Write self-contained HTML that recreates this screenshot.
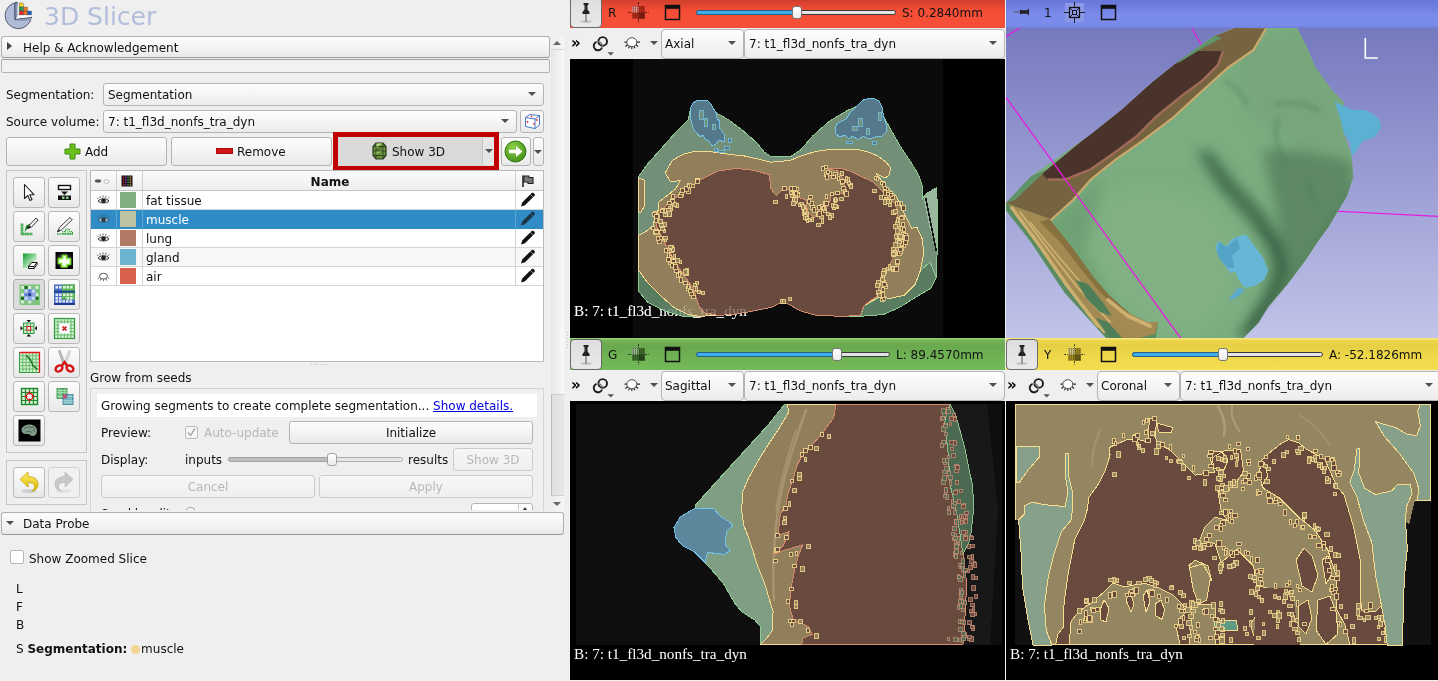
<!DOCTYPE html>
<html lang="en">
<head>
<meta charset="utf-8">
<title>3D Slicer</title>
<style>
html,body{margin:0;padding:0}
body{width:1438px;height:681px;overflow:hidden;background:#efefef;position:relative;-webkit-font-smoothing:antialiased;
 font-family:"DejaVu Sans","Liberation Sans",sans-serif;font-size:12px;color:#111;line-height:18px}
.a{position:absolute;box-sizing:border-box;white-space:nowrap}
.btn{position:absolute;box-sizing:border-box;border:1px solid #b4b4b4;border-radius:3px;
 background:linear-gradient(#fdfdfd,#f2f2f2 60%,#e9e9e9);white-space:nowrap}
.btn.dis{color:#b8b8b8;background:linear-gradient(#f6f6f6,#efefef)}
.combo{position:absolute;box-sizing:border-box;border:1px solid #b4b4b4;border-radius:3px;
 background:linear-gradient(#fefefe,#f3f3f3 60%,#ececec);white-space:nowrap;padding-left:4px}
.arr{position:absolute;width:0;height:0;border-left:4px solid transparent;border-right:4px solid transparent;border-top:4.500px solid #505050}
.tb{position:absolute;box-sizing:border-box;width:32px;height:31px;border:1px solid #b9b9b9;border-radius:3px;
 background:linear-gradient(#fcfcfc,#f1f1f1 60%,#e8e8e8)}
.tb svg{position:absolute;left:0;top:0}
.row{position:absolute;left:91px;width:452px;height:19px;box-sizing:border-box;border-bottom:1px solid #d4d4d4;background:#fff}
.row .c1{position:absolute;left:25px;top:0;width:1px;height:18px;background:#d4d4d4}
.row .c2{position:absolute;left:51px;top:0;width:1px;height:18px;background:#d4d4d4}
.row .c3{position:absolute;left:424px;top:0;width:1px;height:18px;background:#d4d4d4}
.row .sw{position:absolute;left:29px;top:1px;width:16px;height:16px}
.row .nm{position:absolute;left:55px;top:1px}
.row svg{position:absolute}
.serif{font-family:"Liberation Serif","DejaVu Serif",serif;color:#fff;font-size:15px}
</style>
</head>
<body>

<!-- ================= LEFT PANEL ================= -->
<div id="left" class="a" style="left:0;top:0;width:566px;height:681px;background:rgba(239,239,239,.99);will-change:transform">

<!-- logo -->
<svg class="a" style="left:0;top:0" width="36" height="32" viewBox="0 0 36 32">
 <path d="M17.500 2.300A13.200 13.200 0 1 0 31.400 17.200L15 19.200V3z" fill="#b0bbd8" stroke="#4c5268" stroke-width=".9" stroke-linejoin="round"/>
 <path d="M14.200 3.400L17.500 2.300V16.500L14.600 19.300z" fill="#4d5570"/>
 <path d="M15.300 3.800L17.300 3V16L15.500 17.800z" fill="#8792b4"/>
 <path d="M14.600 19.300L31.400 17.200 30.800 19.400C26 21 19 21.200 14.800 20.600z" fill="#8d98ba"/>
 <path d="M14.600 19.300L31.400 17.200" stroke="#3c4258" stroke-width="1"/>
 <path d="M17.500 15.200H30.200L31.300 17.100 16 18.800z" fill="#fafafa"/>
 <path d="M17.500 6v9.500l1.800-.5V4z" fill="#e4ecec"/>
 <rect x="19.300" y="3" width="4" height="4" fill="#f6d21e" stroke="#3a3a44" stroke-width=".350"/>
 <rect x="19.300" y="7" width="4" height="4" fill="#20a060" stroke="#3a3a44" stroke-width=".350"/>
 <rect x="19.300" y="11" width="4" height="3.900" fill="#f02424" stroke="#3a3a44" stroke-width=".350"/>
 <rect x="23.600" y="7" width="3.900" height="4" fill="#f47a28" stroke="#3a3a44" stroke-width=".350"/>
 <rect x="23.600" y="11" width="3.900" height="3.900" fill="#ee7020" stroke="#3a3a44" stroke-width=".350"/>
 <rect x="27.700" y="11" width="3.800" height="3.900" fill="#1c5fc0" stroke="#3a3a44" stroke-width=".350"/>
</svg>
<div class="a" style="left:44px;top:0;font-size:25px;line-height:34px;color:#b3bedd">3D Slicer</div>

<!-- Help & Acknowledgement -->
<div class="btn" style="left:1px;top:36px;width:549px;height:22px;border-color:#b0b0b0;border-bottom-color:#999"></div>
<div class="a" style="left:7px;top:42px;width:0;height:0;border-top:4px solid transparent;border-bottom:4px solid transparent;border-left:5px solid #444"></div>
<div class="a" style="left:23px;top:39px">Help &amp; Acknowledgement</div>
<div class="a" style="left:1px;top:59px;width:549px;height:14px;border:1px solid #b4b4b4;border-top-color:#a0a0a0;border-radius:2px;background:#f1f1f1"></div>

<!-- scrollbar -->
<div class="a" style="left:551px;top:37px;width:13px;height:474px;background:linear-gradient(90deg,#e6e6e6,#f9f9f9)"></div>
<div class="a" style="left:551px;top:37px;width:13px;height:13px;background:linear-gradient(90deg,#ececec,#f6f6f6);border-bottom:1px solid #d8d8d8"></div>
<div class="a" style="left:551px;top:394px;width:13px;height:102px;background:linear-gradient(90deg,#e0e0e0,#e7e7e7);border-left:1px solid #bdbdbd;border-top:1px solid #cfcfcf;border-bottom:1px solid #cfcfcf"></div>
<div class="a" style="left:551px;top:497px;width:13px;height:14px;background:linear-gradient(90deg,#ececec,#f6f6f6)"></div>
<div class="a" style="left:553px;top:41px;width:0;height:0;border-left:4px solid transparent;border-right:4px solid transparent;border-bottom:4px solid #666"></div>
<div class="a" style="left:553px;top:502px;width:0;height:0;border-left:4px solid transparent;border-right:4px solid transparent;border-top:4px solid #666"></div>

<!-- Segmentation row -->
<div class="a" style="left:6px;top:86px">Segmentation:</div>
<div class="combo" style="left:103px;top:83px;width:441px;height:23px;line-height:23px">Segmentation</div>
<div class="arr" style="left:528px;top:92px"></div>
<div class="a" style="left:6px;top:113px">Source volume:</div>
<div class="combo" style="left:103px;top:110px;width:414px;height:23px;line-height:23px">7: t1_fl3d_nonfs_tra_dyn</div>
<div class="arr" style="left:501px;top:119px"></div>
<div class="btn" style="left:520px;top:110px;width:24px;height:23px"></div>
<svg class="a" style="left:524px;top:113px" width="17" height="17" viewBox="0 0 17 17">
 <path d="M1.5 4.5 L6 1.5 L15.5 2.5 L15.5 12 L11 15.5 L1.5 13.5Z M1.5 4.5 L11 6 L15.5 2.5 M11 6 L11 15.5" fill="#fff" stroke="#4a78c8" stroke-width="1" stroke-linejoin="round"/>
 <circle cx="7.5" cy="3.3" r=".9" fill="#e33"/><circle cx="3.5" cy="9" r=".9" fill="#e33"/><circle cx="13" cy="7" r=".9" fill="#e33"/><circle cx="10" cy="11" r=".9" fill="#e33"/>
</svg>

<!-- Add / Remove / Show 3D -->
<div class="btn" style="left:6px;top:137px;width:161px;height:29px"></div>
<svg class="a" style="left:64px;top:143px" width="17" height="17" viewBox="0 0 17 17"><path d="M6 1h5v5h5v5h-5v5h-5v-5h-5v-5h5z" fill="#6cc01c" stroke="#3d8a10" stroke-width="1"/></svg>
<div class="a" style="left:85px;top:143px">Add</div>
<div class="btn" style="left:171px;top:137px;width:161px;height:29px"></div>
<div class="a" style="left:216px;top:148px;width:17px;height:6px;background:#d21414;border:1px solid #a80c0c"></div>
<div class="a" style="left:237px;top:143px">Remove</div>
<div class="a" style="left:333px;top:132px;width:166px;height:39px;border:5px solid #c00000;background:#d9d9d9"></div>
<div class="a" style="left:482px;top:138px;width:1px;height:27px;background:#c4c4c4"></div>
<div class="a" style="left:483px;top:138px;width:11px;height:27px;background:#e6e6e6"></div>
<svg class="a" style="left:372px;top:142px" width="15" height="18" viewBox="0 0 15 18">
 <path d="M4 1h7l3 3.5v9L11 17H4L1 13.5v-9z" fill="#6a9440" stroke="#2c3a1c" stroke-width="1.2"/>
 <path d="M4 1v16M11 1v16M1 4.5h13M1 9h13M1 13.5h13M4 9l7-4.5M4 13.5l7-4.5" stroke="#2c3a1c" stroke-width=".8" fill="none"/>
 <path d="M4.5 1.5h6l-6 3.5z" fill="#b9e08a"/><path d="M4.5 9.5 L10.5 9.5 L4.5 13z" fill="#8fc060"/>
</svg>
<div class="a" style="left:392px;top:143px">Show 3D</div>
<div class="arr" style="left:485px;top:149px"></div>
<div class="btn" style="left:501px;top:137px;width:30px;height:29px"></div>
<svg class="a" style="left:504px;top:140px" width="23" height="23" viewBox="0 0 23 23">
 <defs><radialGradient id="gg" cx=".4" cy=".3" r=".8"><stop offset="0" stop-color="#8fd14a"/><stop offset="1" stop-color="#3a8a12"/></radialGradient></defs>
 <circle cx="11.5" cy="11.5" r="10.5" fill="url(#gg)" stroke="#2f7410" stroke-width="1"/>
 <path d="M5 9.7h7V6l6.5 5.5L12 17v-3.7H5z" fill="#fff"/>
</svg>
<div class="btn" style="left:533px;top:137px;width:11px;height:29px"></div>
<div class="arr" style="left:534px;top:150px;border-left-width:4px;border-right-width:4px"></div>

<!-- effects toolbox -->
<div class="a" style="left:6px;top:170px;width:81px;height:283px;border:1px solid #c6c6c6"></div>
<div class="tb" style="left:13px;top:177px"><svg width="30" height="29" viewBox="0 0 30 29"><path d="M10.5 6.5v14l3.2-3 2.3 5 2-1-2.3-4.8h4.3z" fill="#fff" stroke="#222" stroke-width="1.1" stroke-linejoin="round"/></svg></div>
<div class="tb" style="left:48px;top:177px"><svg width="30" height="29" viewBox="0 0 30 29"><rect x="9.5" y="7.500" width="12" height="4" fill="#fff" stroke="#111" stroke-width="1.4"/><path d="M12 13.5h7l-3.500 3.500z" fill="#111"/><rect x="9" y="17.500" width="13" height="4.500" fill="#111"/><rect x="13" y="18.500" width="2.500" height="2.500" fill="#8c8"/><rect x="17" y="18.500" width="2.500" height="2.500" fill="#8c8"/></svg></div>
<div class="tb" style="left:13px;top:211px"><svg width="30" height="29" viewBox="0 0 30 29"><path d="M8 11.500v10.500h10.500" stroke="#3aa84a" stroke-width="2.600" fill="none"/><path d="M8 11.500v10.500h10.500" stroke="#c8ecc8" stroke-width="1" fill="none" stroke-dasharray="1 1.500"/><path d="M10.500 20l1.500-6.500 7-3z" fill="#1c8c2c"/><path d="M15 13.500l7-7.500 2.200 2-7 7.500z" fill="#f4f4f4" stroke="#222" stroke-width=".9"/><path d="M12.500 16l2.500-2.500 2.200 2-3 1.500z" fill="#222"/></svg></div>
<div class="tb" style="left:48px;top:211px"><svg width="30" height="29" viewBox="0 0 30 29"><path d="M8.500 20l2-4.500 10.500-10 2.200 2.200-10.500 10z" fill="#fafafa" stroke="#222" stroke-width=".9"/><path d="M8.500 20l1.200-2.800 1.600 1.600z" fill="#222"/><path d="M13.500 22v-2.500h3V17h4v2.500h3V22z" fill="#bfe6bf" stroke="#2a9a3a" stroke-width="1" stroke-dasharray="1.200 .800"/><path d="M8 22h16" stroke="#2a9a3a" stroke-width="1.400" stroke-dasharray="1.500 1"/></svg></div>
<div class="tb" style="left:13px;top:245px"><svg width="30" height="29" viewBox="0 0 30 29"><defs><linearGradient id="er" x1="0" y1="0" x2="1" y2="1"><stop offset="0" stop-color="#0f9a2c"/><stop offset=".55" stop-color="#9fdca8"/><stop offset="1" stop-color="#fff"/></linearGradient></defs><path d="M9 7.500h13.500v6l-8 8.500H9z" fill="url(#er)"/><path d="M14.500 20.500l3-4h5.500l-3 4z M14.500 20.500v2h5.500v-2 M20 22.500l3-4v-2" fill="#fff" stroke="#111" stroke-width="1"/></svg></div>
<div class="tb" style="left:48px;top:245px"><svg width="30" height="29" viewBox="0 0 30 29"><defs><radialGradient id="ld"><stop offset="0" stop-color="#9a9a9a"/><stop offset="1" stop-color="#050505"/></radialGradient></defs><rect x="6.500" y="6" width="17.500" height="17" fill="url(#ld)"/><path d="M13.500 9.500h4v3h4v6h-3.500v2.500h-5.500v-3.500h-3v-5h4z" fill="#f4fff0" stroke="#78e22e" stroke-width="1.600" stroke-linejoin="round"/></svg></div>
<div class="tb" style="left:13px;top:279px;background:#dcdcdc;border-color:#adadad"><svg width="30" height="29" viewBox="0 0 30 29"><rect x="5.500" y="4.500" width="20.500" height="20.500" fill="#7fc47f"/><g fill="#d8ecd8"><rect x="7" y="6" width="3" height="3"/><rect x="14.200" y="6" width="3" height="3"/><rect x="21.400" y="6" width="3" height="3"/><rect x="7" y="13.200" width="3" height="3"/><rect x="21.400" y="13.200" width="3" height="3"/><rect x="7" y="20.400" width="3" height="3"/><rect x="14.200" y="20.400" width="3" height="3"/></g><g fill="#1a6a1a"><rect x="10.600" y="6" width="3" height="3"/><rect x="21.400" y="16.800" width="3" height="3"/><rect x="7" y="16.800" width="3" height="3"/></g><rect x="10" y="9" width="11.500" height="11.500" fill="#8aa6e0"/><g fill="#c9d6f2"><rect x="10.600" y="9.600" width="3" height="3"/><rect x="17.800" y="9.600" width="3" height="3"/><rect x="10.600" y="16.800" width="3" height="3"/><rect x="17.800" y="16.800" width="3" height="3"/></g><rect x="14.200" y="13.200" width="3" height="3" fill="#1c3a90"/><rect x="14.200" y="9.600" width="3" height="3" fill="#5f80d0"/><rect x="10.600" y="13.200" width="3" height="3" fill="#5f80d0"/></svg></div>
<div class="tb" style="left:48px;top:279px"><svg width="30" height="29" viewBox="0 0 30 29"><rect x="5" y="4.500" width="21" height="20.500" fill="#4a6cc4"/><rect x="13" y="4.500" width="13" height="15" fill="#5ab45a"/><rect x="5" y="10.800" width="21" height="1.800" fill="#1c3a90"/><rect x="5" y="23" width="21" height="2" fill="#1c3a90"/><g fill="#dfe6f6"><rect x="6.500" y="6" width="2.600" height="2.600"/><rect x="10" y="6" width="2.600" height="2.600"/><rect x="6.500" y="13.500" width="2.600" height="2.600"/><rect x="10" y="13.500" width="2.600" height="2.600"/><rect x="6.500" y="17" width="2.600" height="2.600"/><rect x="10" y="17" width="2.600" height="2.600"/><rect x="13.500" y="20.200" width="2.600" height="2.400"/><rect x="17" y="20.200" width="2.600" height="2.400"/><rect x="20.500" y="20.200" width="2.600" height="2.400"/><rect x="6.500" y="20.200" width="2.600" height="2.400"/><rect x="10" y="20.200" width="2.600" height="2.400"/></g><g fill="#dff0d8"><rect x="14" y="6" width="2.600" height="2.600"/><rect x="17.500" y="6" width="2.600" height="2.600"/><rect x="21" y="6" width="2.600" height="2.600"/><rect x="14" y="13.500" width="2.600" height="2.600"/><rect x="17.500" y="13.500" width="2.600" height="2.600"/><rect x="21" y="13.500" width="2.600" height="2.600"/><rect x="17.500" y="17" width="2.600" height="2.600"/><rect x="21" y="17" width="2.600" height="2.600"/></g></svg></div>
<div class="tb" style="left:13px;top:313px"><svg width="30" height="29" viewBox="0 0 30 29"><rect x="9.500" y="9" width="10.500" height="10.500" fill="#cfeccf" stroke="#2c9a3c" stroke-width="1"/><path d="M13 9v10.500M16.500 9v10.500M9.500 12.500h10.500M9.500 16h10.500" stroke="#2c9a3c" stroke-width=".8"/><rect x="13" y="12.500" width="3.600" height="3.600" fill="#fff" stroke="#e02020" stroke-width="1.100"/><path d="M6.500 12l2.500 2.300-2.500 2.300zM23 12l-2.500 2.300 2.500 2.300zM12.500 6h4.600l-2.300 2.400zM12.500 22.500h4.600l-2.300-2.400z" fill="#111"/></svg></div>
<div class="tb" style="left:48px;top:313px"><svg width="30" height="29" viewBox="0 0 30 29"><rect x="5.500" y="4.500" width="20" height="20" fill="#d6efd6" stroke="#2c9a3c" stroke-width="1.200"/><path d="M8.800 4.500v20M12.100 4.500v20M15.400 4.500v20M18.700 4.500v20M22 4.500v20M5.500 7.800h20M5.500 11.100h20M5.500 14.400h20M5.500 17.700h20M5.500 21h20" stroke="#5cb85c" stroke-width=".9"/><rect x="10.500" y="9.500" width="10" height="10" fill="#fff"/><path d="M13.500 12.500l4 4M17.500 12.500l-4 4" stroke="#d01010" stroke-width="1.600"/></svg></div>
<div class="tb" style="left:13px;top:347px"><svg width="30" height="29" viewBox="0 0 30 29"><rect x="5.500" y="4.500" width="20" height="20" fill="#d6efd6" stroke="#2c9a3c" stroke-width="1"/><path d="M8.800 4.500v20M12.100 4.500v20M15.400 4.500v20M18.700 4.500v20M22 4.500v20M5.500 7.800h20M5.500 11.100h20M5.500 14.400h20M5.500 17.700h20M5.500 21h20" stroke="#5cb85c" stroke-width=".9"/><path d="M5.500 4.500h20v20" fill="none" stroke="#e01818" stroke-width="1.300"/><path d="M12 7.500l4 3.500 3 6.500 4.500 4" stroke="#1c6a1c" stroke-width="1.400" fill="none"/></svg></div>
<div class="tb" style="left:48px;top:347px"><svg width="30" height="29" viewBox="0 0 30 29"><path d="M10.500 3.500l4.800 13" stroke="#b8b8b8" stroke-width="3" stroke-linecap="round"/><path d="M20.500 3.500l-4.800 13" stroke="#d4d4d4" stroke-width="3" stroke-linecap="round"/><ellipse cx="10" cy="20.500" rx="3.700" ry="2.800" transform="rotate(-35 10 20.500)" fill="none" stroke="#d41414" stroke-width="2.400"/><ellipse cx="21" cy="20.500" rx="3.700" ry="2.800" transform="rotate(35 21 20.500)" fill="none" stroke="#d41414" stroke-width="2.400"/><path d="M12.500 18l3-4 3 4" stroke="#d41414" stroke-width="2.400" fill="none"/></svg></div>
<div class="tb" style="left:13px;top:381px"><svg width="30" height="29" viewBox="0 0 30 29"><rect x="7.500" y="6.500" width="16" height="16" fill="#d6efd6" stroke="#1c8a2c" stroke-width="1.400"/><path d="M11.500 6.500v16M15.500 6.500v16M19.500 6.500v16M7.500 10.500h16M7.500 14.500h16M7.500 18.500h16" stroke="#1c8a2c" stroke-width="1.200"/><circle cx="15.500" cy="14.500" r="3.200" fill="#fff" stroke="#e01818" stroke-width="1.200"/><path d="M15.500 9v3.500M15.500 16.500v3.500M10 14.500h3.500M17.500 14.500h3.500" stroke="#e01818" stroke-width="1.200"/></svg></div>
<div class="tb" style="left:48px;top:381px"><svg width="30" height="29" viewBox="0 0 30 29"><rect x="8" y="6.500" width="10" height="10" fill="#5fb86a" stroke="#2c8a3c" stroke-width=".8"/><rect x="14" y="12.500" width="10" height="10" fill="#4fa8b8" stroke="#2c7a8a" stroke-width=".8"/><rect x="14" y="12.500" width="4" height="4" fill="#c0507a"/><path d="M10 6.500v10M12 6.500v10M16 6.500v6M8 8.500h10M8 10.500h10M8 14.500h6M20 12.500v10M22 12.500v10M18 16.500v6M16 16.500v6M14 18.500h10M14 20.500h10M18 14.500h6" stroke="#e0f4e8" stroke-width=".6" opacity=".8"/></svg></div>
<div class="tb" style="left:13px;top:415px"><svg width="30" height="29" viewBox="0 0 30 29"><rect x="4.500" y="3.500" width="22" height="22" fill="#000"/><path d="M7.500 14.500c0-4 4.500-6.500 9-6 4 .5 6.500 3 6.500 6.500 0 3-2 5-4.500 5-2 0-2.500-2-4.500-2-2.500 0-6.500-.5-6.500-3.500z" fill="#7f9a86"/><path d="M10 13c2-2 5-2.500 8-1.500M12 16c2-1 4-1 6 .5M18 10c1.500 1.500 2.500 3.500 2 6" stroke="#4a5e50" stroke-width=".9" fill="none"/></svg></div>
<!-- undo/redo -->
<div class="a" style="left:6px;top:460px;width:81px;height:45px;border:1px solid #c6c6c6"></div>
<div class="tb" style="left:13px;top:467px"><svg width="30" height="29" viewBox="0 0 30 29"><defs><linearGradient id="un" x1="0" y1="0" x2="0" y2="1"><stop offset="0" stop-color="#fdf06a"/><stop offset="1" stop-color="#d8b400"/></linearGradient></defs><ellipse cx="15" cy="23" rx="8" ry="2" fill="#000" opacity=".12"/><path d="M6 11.500l8-7.500v4.500c7 0 10.500 4 10 8.500-.4 3.500-3 5.800-6.500 6.200 2.500-1.500 3.500-3.500 3-5.500-.6-2.400-3-3.200-6.500-3.200v4.500z" fill="url(#un)" stroke="#c8a200" stroke-width=".8" stroke-linejoin="round"/></svg></div>
<div class="tb" style="left:48px;top:467px;border-color:#cfcfcf;background:#f1f1f1"><svg width="30" height="29" viewBox="0 0 30 29"><ellipse cx="15" cy="23" rx="8" ry="2" fill="#000" opacity=".06"/><path d="M24 11.500l-8-7.500v4.500c-7 0-10.500 4-10 8.500.4 3.500 3 5.800 6.500 6.200-2.500-1.500-3.500-3.500-3-5.500.6-2.400 3-3.200 6.500-3.200v4.500z" fill="#c8c8c8" stroke="#bdbdbd" stroke-width=".8" stroke-linejoin="round"/></svg></div>
<!--TOOLBOX_END-->
<!-- segments table -->
<div class="a" style="left:90px;top:170px;width:454px;height:192px;border:1px solid #b9b9b9;background:#fff"></div>
<div class="a" style="left:91px;top:171px;width:452px;height:20px;background:linear-gradient(#fbfbfb,#eeeeee);border-bottom:1px solid #c4c4c4"></div>
<div class="a" style="left:116px;top:171px;width:1px;height:19px;background:#cfcfcf"></div>
<div class="a" style="left:142px;top:171px;width:1px;height:19px;background:#cfcfcf"></div>
<div class="a" style="left:515px;top:171px;width:1px;height:19px;background:#cfcfcf"></div>
<div class="a" style="left:144px;top:173px;width:372px;text-align:center;font-weight:bold">Name</div>
<svg class="a" style="left:93px;top:176px" width="20" height="10" viewBox="0 0 20 10"><ellipse cx="5" cy="5" rx="3.200" ry="1.700" fill="#555"/><ellipse cx="13.500" cy="5.500" rx="2.600" ry="1.800" fill="#fff" stroke="#999" stroke-width=".7"/></svg>
<svg class="a" style="left:121px;top:175px" width="12" height="12" viewBox="0 0 12 12"><rect x=".5" y=".5" width="11" height="11" fill="#181018"/><g stroke-width="1.400"><path d="M2.500 1.500v9" stroke="#b02828"/><path d="M4.800 1.500v9" stroke="#7a3aa8"/><path d="M7.100 1.500v9" stroke="#2a8a4a"/><path d="M9.400 1.500v9" stroke="#c89a28"/></g><path d="M1 3.400h10M1 6h10M1 8.600h10" stroke="#181018" stroke-width=".9"/></svg>
<svg class="a" style="left:521px;top:174px" width="14" height="14" viewBox="0 0 14 14"><path d="M2 1.500v11.500" stroke="#222" stroke-width="1.600"/><path d="M2.800 2h5v1.500h4.200v6H7v-1.500H2.800z" fill="#777" stroke="#222" stroke-width="1.100"/></svg>

<div class="row" style="top:191px"><div class="c1"></div><div class="c2"></div><div class="c3"></div><div class="sw" style="background:#80ae80"></div><div class="nm">fat tissue</div></div>
<div class="row" style="top:210px;background:#308cc6;color:#fff;border-bottom-color:#308cc6"><div class="c1" style="background:#5aa4d2"></div><div class="c2" style="background:#5aa4d2"></div><div class="c3" style="background:#5aa4d2"></div><div class="sw" style="background:#bec2a2"></div><div class="nm">muscle</div></div>
<div class="row" style="top:229px"><div class="c1"></div><div class="c2"></div><div class="c3"></div><div class="sw" style="background:#b17a65"></div><div class="nm">lung</div></div>
<div class="row" style="top:248px;background:#f7f7f7"><div class="c1"></div><div class="c2"></div><div class="c3"></div><div class="sw" style="background:#6ab4d0"></div><div class="nm">gland</div></div>
<div class="row" style="top:267px"><div class="c1"></div><div class="c2"></div><div class="c3"></div><div class="sw" style="background:#d8614d"></div><div class="nm">air</div></div>
<svg class="a" style="left:91px;top:191px" width="452" height="95" viewBox="0 0 452 95">
 <defs>
  <g id="eye"><path d="M-5.500 .5C-3.500-2.500 3.500-2.500 5.500 .5 3.500 3.200-3.500 3.200-5.500 .5z" fill="#ddd" stroke="#333" stroke-width=".9"/><circle cx="0" cy=".3" r="2.300" fill="#222"/><path d="M-5-1.500l-1.300-1.300M-3-2.600l-.7-1.800M-.5-3.100v-1.900M2-2.900l.6-1.800M4.300-1.800l1.300-1.400" stroke="#333" stroke-width=".8"/></g>
  <g id="eyeoff"><ellipse cx="0" cy="-.3" rx="4" ry="2.900" fill="#fff" stroke="#444" stroke-width=".9"/><path d="M-4.300 1l-1.500 1.300M-2.500 2.400l-.8 1.700M0 2.800v1.800M2.500 2.400l.8 1.700M4.300 1l1.500 1.300" stroke="#444" stroke-width=".8"/></g>
  <path id="pen" d="M-6 6l1.200-4 8-8 2.800 2.800-8 8z M3.500-6.300l1.200-1.200c.5-.5 1.300-.5 1.800 0l1 1c.5.500.5 1.300 0 1.800l-1.200 1.200z" fill="#111"/>
 </defs>
 <use href="#eye" x="12.500" y="9.500"/><use href="#eye" x="12.500" y="28.500" opacity=".75"/><use href="#eye" x="12.500" y="47.500"/><use href="#eye" x="12.500" y="66.500"/><use href="#eyeoff" x="12.500" y="85.500"/>
 <use href="#pen" x="436" y="9.500"/><use href="#pen" x="436" y="28.500" opacity=".7"/><use href="#pen" x="436" y="47.500"/><use href="#pen" x="436" y="66.500"/><use href="#pen" x="436" y="85.500"/>
</svg>
<!-- splitter dots -->
<div class="a" style="left:311px;top:364px;width:16px;height:1px;background:repeating-linear-gradient(90deg,#c0c0c0 0 1px,transparent 1px 3px)"></div>

<!-- grow from seeds -->
<div class="a" style="left:90px;top:369px">Grow from seeds</div>
<div class="a" style="left:90px;top:388px;width:454px;height:123px;border:1px solid #d4d4d4;border-bottom:none"></div>
<div class="a" style="left:97px;top:394px;width:440px;height:23px;background:#fff"></div>
<div class="a" style="left:101px;top:397px">Growing segments to create complete segmentation... <span style="color:#0000e0;text-decoration:underline">Show details.</span></div>
<div class="a" style="left:101px;top:424px">Preview:</div>
<div class="a" style="left:185px;top:426px;width:13px;height:13px;border:1px solid #bdbdbd;background:#f6f6f6;border-radius:2px"></div>
<svg class="a" style="left:186px;top:427px" width="11" height="11" viewBox="0 0 11 11"><path d="M2 5.500l2.500 3 4.500-7" stroke="#aaa" stroke-width="1.500" fill="none"/></svg>
<div class="a" style="left:204px;top:424px;color:#b8b8b8">Auto-update</div>
<div class="btn" style="left:289px;top:421px;width:244px;height:23px;text-align:center;line-height:23px">Initialize</div>
<div class="a" style="left:101px;top:451px">Display:</div>
<div class="a" style="left:185px;top:451px">inputs</div>
<div class="a" style="left:228px;top:457px;width:175px;height:5px;border:1px solid #b0b0b0;border-radius:3px;background:#e6e6e6"></div>
<div class="a" style="left:228px;top:457px;width:102px;height:5px;border:1px solid #a4a4a4;border-radius:3px;background:#bdbdbd"></div>
<div class="a" style="left:327px;top:453px;width:10px;height:13px;border:1px solid #a2a2a2;border-radius:3px;background:linear-gradient(#fff,#ececec)"></div>
<div class="a" style="left:408px;top:451px">results</div>
<div class="btn dis" style="left:453px;top:448px;width:80px;height:23px;text-align:center;line-height:23px;border-color:#cbcbcb">Show 3D</div>
<div class="btn dis" style="left:101px;top:475px;width:214px;height:23px;text-align:center;line-height:23px;border-color:#cbcbcb">Cancel</div>
<div class="btn dis" style="left:319px;top:475px;width:214px;height:23px;text-align:center;line-height:23px;border-color:#cbcbcb">Apply</div>
<div class="a" style="left:90px;top:500px;width:454px;height:10px;overflow:hidden">
 <div class="a" style="left:11px;top:5px">Seed locality:</div>
 <div class="a" style="left:95px;top:7px;width:11px;height:11px;border:1px solid #999;border-radius:6px;background:#fff"></div>
 <div class="a" style="left:381px;top:3px;width:62px;height:23px;border:1px solid #b4b4b4;border-radius:3px;background:#fff"></div>
 <div class="a" style="left:428px;top:4px;width:1px;height:20px;background:#c4c4c4"></div>
 <div class="a" style="left:432px;top:7px;width:0;height:0;border-left:3.500px solid transparent;border-right:3.500px solid transparent;border-bottom:4px solid #444"></div>
</div>

<!-- data probe -->
<div class="btn" style="left:1px;top:512px;width:563px;height:23px;border-color:#b0b0b0;border-bottom-color:#999"></div>
<div class="arr" style="left:6px;top:521px"></div>
<div class="a" style="left:23px;top:515px">Data Probe</div>
<div class="a" style="left:10px;top:550px;width:14px;height:14px;border:1px solid #b6b6b6;background:#fff;border-radius:2px"></div>
<div class="a" style="left:29px;top:550px">Show Zoomed Slice</div>
<div class="a" style="left:16px;top:580px">L</div>
<div class="a" style="left:16px;top:598px">F</div>
<div class="a" style="left:16px;top:616px">B</div>
<div class="a" style="left:16px;top:640px">S <b>Segmentation:</b> <span style="display:inline-block;width:9px;height:9px;border-radius:5px;background:#f1d691;vertical-align:-1px;margin-right:1px"></span>muscle</div>

</div>

<div id="right" class="a" style="left:0;top:0;width:1438px;height:681px;will-change:transform">
<!-- ================= RIGHT PANEL ================= -->
<style>
.bar{position:absolute;box-sizing:border-box;height:32px}
.pin{position:absolute;box-sizing:border-box;left:0;top:1px;width:32px;height:31px;border:1px solid #6a6a6a;border-radius:4px;background:linear-gradient(#dedede,#e9e9e9)}
.bar .lbl{position:absolute;left:38px;top:8px;color:#111}
.bar .val{position:absolute;top:8px;color:#111}
.sl{position:absolute;top:14px;height:5px;box-sizing:border-box;border:1px solid #3a3a3a;border-radius:3px;background:#e4e4e4}
.slf{position:absolute;top:14px;height:5px;box-sizing:border-box;border:1px solid #2a5f8a;border-radius:3px;background:#3daee9}
.slh{position:absolute;top:10px;width:10px;height:13px;box-sizing:border-box;border:1px solid #777;border-radius:3px;background:linear-gradient(#fff,#ececec)}
.ctl{position:absolute;height:31px;background:#efefef}
.ctl .combo{top:1px;height:30px;line-height:28px;padding-left:3px;border-radius:4px}
</style>
<!-- splitter -->
<div class="a" style="left:566px;top:0;width:4px;height:681px;background:#efefef"></div>
<div class="a" style="left:567px;top:332px;width:1px;height:16px;background:repeating-linear-gradient(#c0c0c0 0 1px,transparent 1px 3px)"></div>
<!-- view area black bg -->
<div class="a" style="left:570px;top:0;width:868px;height:681px;background:#000"></div>
<div class="a" style="left:570px;top:680px;width:868px;height:1px;background:#efefef"></div>
<div class="a" style="left:1005px;top:0;width:1px;height:681px;background:#efefef"></div>

<!-- RED bar -->
<div class="bar" style="left:570px;top:-4px;width:435px;background:linear-gradient(#b53625 0,#cf3f2c 12%,#f44e36 45%,#f64f37 100%)">
 <div class="pin"></div>
 <svg class="a" style="left:8px;top:6px" width="16" height="22" viewBox="0 0 16 22"><use href="#pinico"/></svg>
 <div class="lbl">R</div>
 <svg class="a" style="left:58px;top:6px" width="21" height="21" viewBox="0 0 21 21"><use href="#slcico" style="color:#7a1208"/></svg>
 <svg class="a" style="left:94px;top:8px" width="17" height="17" viewBox="0 0 17 17"><rect x="1.500" y="1.500" width="14" height="14" fill="none" stroke="#111" stroke-width="1.500"/><rect x="1" y="1" width="15" height="3.800" fill="#111"/></svg>
 <div class="sl" style="left:126px;width:200px"></div><div class="slf" style="left:126px;width:102px"></div><div class="slh" style="left:222px"></div>
 <div class="val" style="left:332px">S: 0.2840mm</div>
</div>
<div class="ctl" style="left:570px;top:28px;width:435px">
 <div class="a" style="left:1px;top:6px;font-weight:bold;font-size:15px;color:#000">»</div>
 <svg class="a" style="left:20px;top:5px" width="26" height="24" viewBox="0 0 26 24"><use href="#lnkico"/></svg>
 <svg class="a" style="left:52px;top:6px" width="22" height="20" viewBox="0 0 22 20"><use href="#eyeico"/></svg>
 <div class="arr" style="left:80px;top:13px"></div>
 <div class="combo" style="left:91px;width:83px">Axial</div><div class="arr" style="left:158px;top:13px"></div>
 <div class="combo" style="left:174px;width:261px;padding-left:4px">7: t1_fl3d_nonfs_tra_dyn</div><div class="arr" style="left:419px;top:13px"></div>
</div>

<!-- GREEN bar -->
<div class="bar" style="left:570px;top:338px;width:435px;background:linear-gradient(#9ad873 0,#74b358 8%,#69a84e 25%,#6fb354 60%,#74ba58 100%)">
 <div class="pin"></div>
 <svg class="a" style="left:8px;top:6px" width="16" height="22" viewBox="0 0 16 22"><use href="#pinico"/></svg>
 <div class="lbl">G</div>
 <svg class="a" style="left:58px;top:6px" width="21" height="21" viewBox="0 0 21 21"><use href="#slcico" style="color:#1c3a10"/></svg>
 <svg class="a" style="left:94px;top:8px" width="17" height="17" viewBox="0 0 17 17"><rect x="1.500" y="1.500" width="14" height="14" fill="none" stroke="#111" stroke-width="1.500"/><rect x="1" y="1" width="15" height="3.800" fill="#111"/></svg>
 <div class="sl" style="left:126px;width:194px"></div><div class="slf" style="left:126px;width:142px"></div><div class="slh" style="left:262px"></div>
 <div class="val" style="left:326px">L: 89.4570mm</div>
</div>
<div class="ctl" style="left:570px;top:370px;width:435px">
 <div class="a" style="left:1px;top:6px;font-weight:bold;font-size:15px;color:#000">»</div>
 <svg class="a" style="left:20px;top:5px" width="26" height="24" viewBox="0 0 26 24"><use href="#lnkico"/></svg>
 <svg class="a" style="left:52px;top:6px" width="22" height="20" viewBox="0 0 22 20"><use href="#eyeico"/></svg>
 <div class="arr" style="left:80px;top:13px"></div>
 <div class="combo" style="left:91px;width:83px">Sagittal</div><div class="arr" style="left:158px;top:13px"></div>
 <div class="combo" style="left:174px;width:261px;padding-left:4px">7: t1_fl3d_nonfs_tra_dyn</div><div class="arr" style="left:419px;top:13px"></div>
</div>

<!-- BLUE 3D bar -->
<div class="bar" style="left:1006px;top:-4px;width:432px;background:linear-gradient(#6473d4 0,#6a79dc 22%,#7b8beb 58%,#7a8ae9 93%,#707ed6 100%)">
 <svg class="a" style="left:8px;top:11px" width="18" height="10" viewBox="0 0 18 10"><path d="M0 5h7" stroke="#555" stroke-width="1"/><path d="M6 2.500v5l2-.8h5l2 1.800v-7l-2 1.800h-5z" fill="#222"/></svg>
 <div class="lbl" style="left:38px">1</div>
 <svg class="a" style="left:58px;top:6px" width="21" height="21" viewBox="0 0 21 21"><rect x="1" y="1" width="19" height="19" fill="#8a98e6"/><rect x="5.500" y="5.500" width="10" height="10" fill="none" stroke="#111" stroke-width="1.200"/><rect x="8.500" y="8.500" width="4" height="4" fill="none" stroke="#111" stroke-width="1"/><path d="M10.500 0v5.500M10.500 15.500v5.500M0 10.500h5.500M15.500 10.500h5.500M5.500 5.500l3 3M15.500 5.500l-3 3M5.500 15.500l3-3M15.500 15.500l-3-3" stroke="#111" stroke-width=".9"/></svg>
 <svg class="a" style="left:94px;top:8px" width="17" height="17" viewBox="0 0 17 17"><rect x="1.500" y="1.500" width="14" height="14" fill="none" stroke="#111" stroke-width="1.500"/><rect x="1" y="1" width="15" height="3.800" fill="#111"/></svg>
</div>

<!-- YELLOW bar -->
<div class="bar" style="left:1006px;top:338px;width:432px;background:linear-gradient(#f8ec8a 0,#edd54a 8%,#e6cf44 25%,#efd94a 60%,#f4de50 100%)">
 <div class="pin"></div>
 <svg class="a" style="left:8px;top:6px" width="16" height="22" viewBox="0 0 16 22"><use href="#pinico"/></svg>
 <div class="lbl">Y</div>
 <svg class="a" style="left:58px;top:6px" width="21" height="21" viewBox="0 0 21 21"><use href="#slcico" style="color:#5a4a08"/></svg>
 <svg class="a" style="left:94px;top:8px" width="17" height="17" viewBox="0 0 17 17"><rect x="1.500" y="1.500" width="14" height="14" fill="none" stroke="#111" stroke-width="1.500"/><rect x="1" y="1" width="15" height="3.800" fill="#111"/></svg>
 <div class="sl" style="left:126px;width:191px"></div><div class="slf" style="left:126px;width:92px"></div><div class="slh" style="left:212px"></div>
 <div class="val" style="left:323px">A: -52.1826mm</div>
</div>
<div class="ctl" style="left:1006px;top:370px;width:432px">
 <div class="a" style="left:1px;top:6px;font-weight:bold;font-size:15px;color:#000">»</div>
 <svg class="a" style="left:20px;top:5px" width="26" height="24" viewBox="0 0 26 24"><use href="#lnkico"/></svg>
 <svg class="a" style="left:52px;top:6px" width="22" height="20" viewBox="0 0 22 20"><use href="#eyeico"/></svg>
 <div class="arr" style="left:80px;top:13px"></div>
 <div class="combo" style="left:91px;width:83px">Coronal</div><div class="arr" style="left:158px;top:13px"></div>
 <div class="combo" style="left:174px;width:262px;padding-left:4px">7: t1_fl3d_nonfs_tra_dyn</div><div class="arr" style="left:419px;top:13px"></div>
</div>

<!-- shared icon defs -->
<svg width="0" height="0" style="position:absolute">
 <defs>
  <g id="pinico"><ellipse cx="8" cy="19.500" rx="6" ry="1.500" fill="#000" opacity=".15"/><path d="M8 12v7.500" stroke="#555" stroke-width="1"/><path d="M5.500 1h5v1.500l-1 1v4l2 2.500v2h-7v-2l2-2.500v-4l-1-1z" fill="#222"/><path d="M6.800 3.500v4" stroke="#888" stroke-width=".8"/></g>
  <g id="slcico"><rect x="4.200" y="4.200" width="12.600" height="12.600" fill="currentColor" opacity=".55"/><rect x="4.200" y="4.200" width="6.300" height="6.300" fill="#fff" opacity=".5"/><rect x="10.500" y="10.500" width="6.300" height="6.300" fill="#000" opacity=".35"/><path d="M5.300 4.200v12.600M7.400 4.200v12.600M9.500 4.200v12.600M11.600 4.200v12.600M13.700 4.200v12.600M15.800 4.200v12.600" stroke="currentColor" stroke-width="1" stroke-dasharray="1.100 1" opacity=".9"/><path d="M10.500 .5v3M10.500 17.500v3M.5 10.500h3M17.500 10.500h3" stroke="#111" stroke-width="1" stroke-dasharray="1.500 1"/></g>
  <g id="lnkico"><circle cx="12.700" cy="8.400" r="4.300" fill="none" stroke="#1a1a1a" stroke-width="1.900"/><path d="M6.530 8.960A4.300 4.300 0 1 0 12.040 14.470" fill="none" stroke="#1a1a1a" stroke-width="1.900"/><path d="M6.530 8.960A4.300 4.300 0 0 1 12.040 14.470" fill="none" stroke="#777" stroke-width="1.200"/><path d="M17.500 19.200h6.400l-3.200 3.400z" fill="#555"/></g>
  <g id="eyeico"><path d="M2.500 8.200h3M14.500 8.200h3.500M3.500 12.500l2.500-2.300M6.500 14.300l1.400-2.700M9.800 15v-2.800M13 14.300l-1.400-2.700M16 12.500l-2.500-2.300" stroke="#2a2a2a" stroke-width="1.200"/><ellipse cx="9.800" cy="8.200" rx="5" ry="4.500" fill="#fff" stroke="#4a4a4a" stroke-width="1"/></g>
 </defs>
</svg>
<!--VIEWS_START--><svg class="a" style="left:570px;top:59px" width="435" height="279" viewBox="570 59 435 279" shape-rendering="crispEdges">
<defs><filter id="nz" x="0" y="0" width="100%" height="100%"><feTurbulence type="fractalNoise" baseFrequency=".9" numOctaves="2" seed="3"/><feColorMatrix values="0 0 0 0 1  0 0 0 0 1  0 0 0 0 1  .5 .5 .5 0 -.55"/><feComposite in2="SourceGraphic" operator="in"/></filter></defs>
<rect x="633" y="59" width="310" height="279" fill="#0b0b0b"/>
<text x="574" y="316" class="serif" style="font-size:15.200px" fill="#fff">B: 7: t1_fl3d_nonfs_tra_dyn</text>
<polygon points="638.8,291.6 638.8,176.3 647.6,164.0 661.7,148.1 675.8,132.3 688.1,120.0 690.8,107.6 697.0,100.6 707.5,100.6 712.8,107.6 716.3,112.9 728.7,120.0 742.8,130.5 756.9,142.9 763.9,151.7 771.0,156.6 790.0,157.0 800.6,149.9 812.9,135.8 828.8,121.7 846.4,111.1 857.0,105.9 864.0,99.7 871.0,97.9 878.1,100.6 882.5,107.6 883.4,116.4 890.4,128.8 899.3,144.6 909.8,160.5 918.6,174.6 922.2,185.2 922.2,199.3 925.7,194.0 936.3,187.8 937.1,200.0 937.1,252.9 936.3,277.5 931.0,288.1 913.3,298.7 899.3,307.5 883.4,314.5 860.5,316.3 842.9,316.3 816.4,315.4 800.6,311.0 790.0,305.0 783.3,301.3 771.0,307.5 753.3,311.0 735.7,314.2 718.1,315.4 698.7,316.3 682.9,316.3 665.2,311.0 647.6,302.2" fill="#748f78" stroke="#8fc890" stroke-width="1" stroke-linejoin="round" />
<polygon points="924.0,200.0 926.0,194.0 936.3,187.8 937.1,200.0 937.1,250.0 930.0,230.0" fill="#9ab89e" />
<path d="M925.700 198L936.300 251" stroke="#111" stroke-width="1.500" fill="none"/>
<polygon points="638.8,270.5 638.8,291.6 647.6,302.2 665.2,311.0 682.9,316.3 698.7,316.3 688.1,314.5 674.0,307.5 660.0,295.2 647.6,282.8" fill="#5a7d62" stroke="#8fc890" stroke-width="1" stroke-linejoin="round" />
<polygon points="936.3,277.5 931.0,288.1 913.3,298.7 899.3,307.5 883.4,314.5 860.5,316.3 864.0,306.0 881.6,296.0 888.7,298.7 904.5,295.2 915.1,284.6 920.4,270.5 930.0,262.0" fill="#5a7d62" stroke="#8fc890" stroke-width="1" stroke-linejoin="round" />
<polygon points="665.2,172.8 672.3,160.5 682.9,154.3 695.2,151.3 712.8,152.0 728.7,154.3 744.5,156.0 760.4,159.6 771.0,162.2 790.0,160.5 800.6,156.1 814.7,151.7 828.8,149.6 855.2,149.0 867.5,151.7 878.1,156.1 886.0,162.2 890.4,167.5 889.6,174.6 885.2,178.1 876.3,173.7 885.2,185.2 895.7,195.7 902.8,210.0 906.3,217.6 911.6,228.2 916.9,227.3 922.2,238.8 923.9,252.9 920.4,270.5 915.1,284.6 904.5,295.2 888.7,298.7 881.6,295.2 864.0,305.7 860.5,315.4 842.9,316.3 816.4,315.4 800.6,311.0 790.0,305.0 783.3,301.3 771.0,307.5 753.3,311.0 735.7,314.2 718.1,315.4 698.7,316.3 688.1,314.5 674.0,307.5 660.0,295.2 647.6,282.8 638.8,270.5 638.8,235.2 645.0,232.0 652.9,226.4 654.7,217.6 658.2,210.0 659.0,201.9 667.0,195.7 675.8,188.7 680.2,180.7 670.5,181.6" fill="#917f5c" stroke="#f6dc8e" stroke-width="1" stroke-linejoin="round" />
<polygon points="638.8,178.0 644.0,180.0 645.0,205.0 641.0,212.0 638.8,212.0" fill="#917f5c" stroke="#f6dc8e" stroke-width="1" stroke-linejoin="round" />
<polygon points="668.8,202.8 682.9,192.2 700.5,179.9 718.1,171.0 735.7,168.4 753.3,170.2 769.2,174.6 771.0,188.7 776.3,195.7 781.5,190.4 790.0,188.7 793.5,195.7 805.9,200.0 807.6,212.3 814.7,217.6 820.0,208.8 825.2,210.6 830.5,200.0 830.5,195.7 846.4,192.2 842.9,178.1 837.6,171.0 825.2,168.4 841.1,168.4 849.9,171.0 860.5,176.3 872.8,181.6 885.2,194.0 895.7,204.5 897.5,217.6 899.3,235.2 895.7,252.9 886.9,270.5 878.1,284.6 878.1,295.2 864.0,305.7 860.5,315.4 842.9,316.3 816.4,315.4 800.6,311.0 790.0,305.0 783.3,301.3 771.0,307.5 753.3,311.0 735.7,314.2 718.1,315.4 704.0,312.8 698.7,305.7 693.4,288.1 682.9,274.0 674.0,259.9 665.2,244.0 656.4,226.4 656.4,215.9" fill="#684a3e" stroke="#d48c6c" stroke-width="1" stroke-linejoin="round" />
<rect x="827.500" y="171.500" width="4" height="4" fill="#684a3e" stroke="#f6dc8e" stroke-opacity=".8"/>
<rect x="658.500" y="236.500" width="4" height="4" fill="#684a3e" stroke="#f6dc8e" stroke-opacity=".8"/>
<rect x="830.500" y="213.500" width="3" height="4" fill="#917f5c" stroke="#f6dc8e" stroke-opacity=".8"/>
<rect x="900.500" y="226.500" width="2" height="4" fill="#684a3e" stroke="#f6dc8e" stroke-opacity=".8"/>
<rect x="799.500" y="202.500" width="4" height="4" fill="#917f5c" stroke="#f6dc8e" stroke-opacity=".8"/>
<rect x="895.500" y="239.500" width="4" height="3" fill="#917f5c" stroke="#f6dc8e" stroke-opacity=".8"/>
<rect x="890.500" y="195.500" width="4" height="4" fill="#684a3e" stroke="#f6dc8e" stroke-opacity=".8"/>
<rect x="895.500" y="201.500" width="4" height="4" fill="#684a3e" stroke="#f6dc8e" stroke-opacity=".8"/>
<rect x="802.500" y="210.500" width="3" height="5" fill="#917f5c" stroke="#f6dc8e" stroke-opacity=".8"/>
<rect x="662.500" y="208.500" width="4" height="4" fill="#684a3e" stroke="#f6dc8e" stroke-opacity=".8"/>
<rect x="667.500" y="213.500" width="3" height="3" fill="#917f5c" stroke="#f6dc8e" stroke-opacity=".8"/>
<rect x="669.500" y="249.500" width="4" height="3" fill="#917f5c" stroke="#f6dc8e" stroke-opacity=".8"/>
<rect x="880.500" y="278.500" width="4" height="3" fill="#917f5c" stroke="#f6dc8e" stroke-opacity=".8"/>
<rect x="880.500" y="298.500" width="4" height="3" fill="#684a3e" stroke="#f6dc8e" stroke-opacity=".8"/>
<rect x="670.500" y="263.500" width="3" height="4" fill="#684a3e" stroke="#f6dc8e" stroke-opacity=".8"/>
<rect x="773.500" y="200.500" width="4" height="3" fill="#917f5c" stroke="#f6dc8e" stroke-opacity=".8"/>
<rect x="653.500" y="211.500" width="4" height="4" fill="#684a3e" stroke="#f6dc8e" stroke-opacity=".8"/>
<rect x="900.500" y="234.500" width="2" height="3" fill="#684a3e" stroke="#f6dc8e" stroke-opacity=".8"/>
<rect x="823.500" y="208.500" width="3" height="4" fill="#684a3e" stroke="#f6dc8e" stroke-opacity=".8"/>
<rect x="701.500" y="291.500" width="3" height="3" fill="#917f5c" stroke="#f6dc8e" stroke-opacity=".8"/>
<rect x="691.500" y="295.500" width="4" height="3" fill="#684a3e" stroke="#f6dc8e" stroke-opacity=".8"/>
<rect x="833.500" y="198.500" width="4" height="3" fill="#917f5c" stroke="#f6dc8e" stroke-opacity=".8"/>
<rect x="899.500" y="247.500" width="3" height="4" fill="#684a3e" stroke="#f6dc8e" stroke-opacity=".8"/>
<rect x="882.500" y="296.500" width="3" height="4" fill="#684a3e" stroke="#f6dc8e" stroke-opacity=".8"/>
<rect x="686.500" y="188.500" width="4" height="5" fill="#684a3e" stroke="#f6dc8e" stroke-opacity=".8"/>
<rect x="793.500" y="190.500" width="4" height="4" fill="#684a3e" stroke="#f6dc8e" stroke-opacity=".8"/>
<rect x="805.500" y="212.500" width="3" height="4" fill="#917f5c" stroke="#f6dc8e" stroke-opacity=".8"/>
<rect x="885.500" y="198.500" width="3" height="3" fill="#917f5c" stroke="#f6dc8e" stroke-opacity=".8"/>
<rect x="825.500" y="194.500" width="2" height="4" fill="#684a3e" stroke="#f6dc8e" stroke-opacity=".8"/>
<rect x="795.500" y="187.500" width="3" height="3" fill="#684a3e" stroke="#f6dc8e" stroke-opacity=".8"/>
<rect x="809.500" y="201.500" width="4" height="4" fill="#684a3e" stroke="#f6dc8e" stroke-opacity=".8"/>
<rect x="675.500" y="203.500" width="3" height="4" fill="#917f5c" stroke="#f6dc8e" stroke-opacity=".8"/>
<rect x="663.500" y="213.500" width="4" height="3" fill="#917f5c" stroke="#f6dc8e" stroke-opacity=".8"/>
<rect x="663.500" y="229.500" width="2" height="3" fill="#917f5c" stroke="#f6dc8e" stroke-opacity=".8"/>
<rect x="883.500" y="190.500" width="3" height="5" fill="#684a3e" stroke="#f6dc8e" stroke-opacity=".8"/>
<rect x="900.500" y="239.500" width="3" height="3" fill="#684a3e" stroke="#f6dc8e" stroke-opacity=".8"/>
<rect x="652.500" y="212.500" width="4" height="4" fill="#684a3e" stroke="#f6dc8e" stroke-opacity=".8"/>
<rect x="695.500" y="281.500" width="3" height="3" fill="#917f5c" stroke="#f6dc8e" stroke-opacity=".8"/>
<rect x="668.500" y="260.500" width="2" height="4" fill="#684a3e" stroke="#f6dc8e" stroke-opacity=".8"/>
<rect x="883.500" y="280.500" width="2" height="4" fill="#684a3e" stroke="#f6dc8e" stroke-opacity=".8"/>
<rect x="894.500" y="266.500" width="2" height="4" fill="#684a3e" stroke="#f6dc8e" stroke-opacity=".8"/>
<rect x="796.500" y="192.500" width="3" height="3" fill="#684a3e" stroke="#f6dc8e" stroke-opacity=".8"/>
<rect x="820.500" y="204.500" width="3" height="4" fill="#684a3e" stroke="#f6dc8e" stroke-opacity=".8"/>
<rect x="891.500" y="251.500" width="4" height="5" fill="#917f5c" stroke="#f6dc8e" stroke-opacity=".8"/>
<rect x="674.500" y="269.500" width="4" height="3" fill="#684a3e" stroke="#f6dc8e" stroke-opacity=".8"/>
<rect x="690.500" y="184.500" width="4" height="3" fill="#684a3e" stroke="#f6dc8e" stroke-opacity=".8"/>
<rect x="832.500" y="204.500" width="4" height="4" fill="#917f5c" stroke="#f6dc8e" stroke-opacity=".8"/>
<rect x="828.500" y="215.500" width="3" height="4" fill="#917f5c" stroke="#f6dc8e" stroke-opacity=".8"/>
<rect x="880.500" y="277.500" width="4" height="4" fill="#917f5c" stroke="#f6dc8e" stroke-opacity=".8"/>
<rect x="879.500" y="195.500" width="3" height="4" fill="#917f5c" stroke="#f6dc8e" stroke-opacity=".8"/>
<rect x="816.500" y="212.500" width="3" height="4" fill="#684a3e" stroke="#f6dc8e" stroke-opacity=".8"/>
<rect x="684.500" y="271.500" width="4" height="4" fill="#917f5c" stroke="#f6dc8e" stroke-opacity=".8"/>
<rect x="670.500" y="199.500" width="3" height="3" fill="#684a3e" stroke="#f6dc8e" stroke-opacity=".8"/>
<rect x="886.500" y="267.500" width="3" height="3" fill="#917f5c" stroke="#f6dc8e" stroke-opacity=".8"/>
<rect x="901.500" y="232.500" width="4" height="3" fill="#684a3e" stroke="#f6dc8e" stroke-opacity=".8"/>
<rect x="803.500" y="209.500" width="3" height="4" fill="#917f5c" stroke="#f6dc8e" stroke-opacity=".8"/>
<rect x="790.500" y="194.500" width="3" height="3" fill="#917f5c" stroke="#f6dc8e" stroke-opacity=".8"/>
<rect x="834.500" y="205.500" width="4" height="3" fill="#917f5c" stroke="#f6dc8e" stroke-opacity=".8"/>
<rect x="679.500" y="192.500" width="4" height="4" fill="#684a3e" stroke="#f6dc8e" stroke-opacity=".8"/>
<rect x="683.500" y="281.500" width="4" height="3" fill="#684a3e" stroke="#f6dc8e" stroke-opacity=".8"/>
<rect x="840.500" y="171.500" width="3" height="4" fill="#917f5c" stroke="#f6dc8e" stroke-opacity=".8"/>
<rect x="660.500" y="227.500" width="4" height="3" fill="#917f5c" stroke="#f6dc8e" stroke-opacity=".8"/>
<rect x="886.500" y="192.500" width="4" height="3" fill="#684a3e" stroke="#f6dc8e" stroke-opacity=".8"/>
<rect x="832.500" y="206.500" width="3" height="3" fill="#917f5c" stroke="#f6dc8e" stroke-opacity=".8"/>
<rect x="655.500" y="214.500" width="4" height="4" fill="#684a3e" stroke="#f6dc8e" stroke-opacity=".8"/>
<rect x="789.500" y="186.500" width="4" height="4" fill="#684a3e" stroke="#f6dc8e" stroke-opacity=".8"/>
<rect x="884.500" y="198.500" width="4" height="4" fill="#917f5c" stroke="#f6dc8e" stroke-opacity=".8"/>
<rect x="823.500" y="201.500" width="2" height="4" fill="#684a3e" stroke="#f6dc8e" stroke-opacity=".8"/>
<rect x="845.500" y="177.500" width="4" height="5" fill="#917f5c" stroke="#f6dc8e" stroke-opacity=".8"/>
<rect x="676.500" y="273.500" width="2" height="4" fill="#684a3e" stroke="#f6dc8e" stroke-opacity=".8"/>
<rect x="793.500" y="188.500" width="2" height="4" fill="#684a3e" stroke="#f6dc8e" stroke-opacity=".8"/>
<rect x="821.500" y="166.500" width="3" height="4" fill="#684a3e" stroke="#f6dc8e" stroke-opacity=".8"/>
<rect x="686.500" y="286.500" width="4" height="4" fill="#684a3e" stroke="#f6dc8e" stroke-opacity=".8"/>
<rect x="658.500" y="219.500" width="4" height="4" fill="#917f5c" stroke="#f6dc8e" stroke-opacity=".8"/>
<rect x="792.500" y="198.500" width="4" height="5" fill="#917f5c" stroke="#f6dc8e" stroke-opacity=".8"/>
<rect x="891.500" y="247.500" width="4" height="3" fill="#917f5c" stroke="#f6dc8e" stroke-opacity=".8"/>
<rect x="802.500" y="205.500" width="3" height="5" fill="#917f5c" stroke="#f6dc8e" stroke-opacity=".8"/>
<rect x="667.500" y="255.500" width="4" height="4" fill="#684a3e" stroke="#f6dc8e" stroke-opacity=".8"/>
<rect x="830.500" y="192.500" width="3" height="3" fill="#684a3e" stroke="#f6dc8e" stroke-opacity=".8"/>
<rect x="902.500" y="227.500" width="3" height="4" fill="#684a3e" stroke="#f6dc8e" stroke-opacity=".8"/>
<rect x="678.500" y="194.500" width="4" height="3" fill="#684a3e" stroke="#f6dc8e" stroke-opacity=".8"/>
<rect x="831.500" y="203.500" width="3" height="4" fill="#917f5c" stroke="#f6dc8e" stroke-opacity=".8"/>
<rect x="895.500" y="201.500" width="2" height="4" fill="#684a3e" stroke="#f6dc8e" stroke-opacity=".8"/>
<rect x="874.500" y="176.500" width="4" height="3" fill="#684a3e" stroke="#f6dc8e" stroke-opacity=".8"/>
<rect x="881.500" y="287.500" width="3" height="4" fill="#684a3e" stroke="#f6dc8e" stroke-opacity=".8"/>
<rect x="673.500" y="264.500" width="4" height="5" fill="#684a3e" stroke="#f6dc8e" stroke-opacity=".8"/>
<rect x="897.500" y="251.500" width="4" height="4" fill="#684a3e" stroke="#f6dc8e" stroke-opacity=".8"/>
<rect x="654.500" y="217.500" width="3" height="5" fill="#684a3e" stroke="#f6dc8e" stroke-opacity=".8"/>
<rect x="891.500" y="266.500" width="3" height="5" fill="#684a3e" stroke="#f6dc8e" stroke-opacity=".8"/>
<rect x="661.500" y="208.500" width="3" height="4" fill="#684a3e" stroke="#f6dc8e" stroke-opacity=".8"/>
<rect x="893.500" y="210.500" width="4" height="3" fill="#917f5c" stroke="#f6dc8e" stroke-opacity=".8"/>
<rect x="821.500" y="218.500" width="2" height="5" fill="#917f5c" stroke="#f6dc8e" stroke-opacity=".8"/>
<rect x="848.500" y="183.500" width="4" height="3" fill="#917f5c" stroke="#f6dc8e" stroke-opacity=".8"/>
<rect x="689.500" y="290.500" width="4" height="5" fill="#684a3e" stroke="#f6dc8e" stroke-opacity=".8"/>
<rect x="896.500" y="263.500" width="2" height="4" fill="#684a3e" stroke="#f6dc8e" stroke-opacity=".8"/>
<rect x="895.500" y="221.500" width="4" height="5" fill="#917f5c" stroke="#f6dc8e" stroke-opacity=".8"/>
<rect x="837.500" y="176.500" width="2" height="4" fill="#684a3e" stroke="#f6dc8e" stroke-opacity=".8"/>
<rect x="900.500" y="215.500" width="4" height="4" fill="#684a3e" stroke="#f6dc8e" stroke-opacity=".8"/>
<rect x="780.500" y="299.500" width="3" height="4" fill="#917f5c" stroke="#f6dc8e" stroke-opacity=".8"/>
<rect x="884.500" y="284.500" width="3" height="4" fill="#684a3e" stroke="#f6dc8e" stroke-opacity=".8"/>
<rect x="880.500" y="181.500" width="4" height="3" fill="#684a3e" stroke="#f6dc8e" stroke-opacity=".8"/>
<rect x="892.500" y="267.500" width="3" height="3" fill="#684a3e" stroke="#f6dc8e" stroke-opacity=".8"/>
<rect x="872.500" y="189.500" width="4" height="3" fill="#917f5c" stroke="#f6dc8e" stroke-opacity=".8"/>
<rect x="693.500" y="283.500" width="3" height="3" fill="#917f5c" stroke="#f6dc8e" stroke-opacity=".8"/>
<rect x="662.500" y="222.500" width="4" height="4" fill="#917f5c" stroke="#f6dc8e" stroke-opacity=".8"/>
<rect x="656.500" y="213.500" width="2" height="4" fill="#684a3e" stroke="#f6dc8e" stroke-opacity=".8"/>
<rect x="792.500" y="186.500" width="4" height="4" fill="#684a3e" stroke="#f6dc8e" stroke-opacity=".8"/>
<rect x="886.500" y="187.500" width="2" height="3" fill="#684a3e" stroke="#f6dc8e" stroke-opacity=".8"/>
<rect x="904.500" y="240.500" width="2" height="3" fill="#684a3e" stroke="#f6dc8e" stroke-opacity=".8"/>
<rect x="894.500" y="266.500" width="4" height="5" fill="#684a3e" stroke="#f6dc8e" stroke-opacity=".8"/>
<rect x="888.500" y="264.500" width="2" height="5" fill="#917f5c" stroke="#f6dc8e" stroke-opacity=".8"/>
<rect x="680.500" y="188.500" width="4" height="4" fill="#684a3e" stroke="#f6dc8e" stroke-opacity=".8"/>
<rect x="847.500" y="181.500" width="3" height="3" fill="#917f5c" stroke="#f6dc8e" stroke-opacity=".8"/>
<rect x="785.500" y="194.500" width="2" height="4" fill="#917f5c" stroke="#f6dc8e" stroke-opacity=".8"/>
<rect x="668.500" y="206.500" width="4" height="4" fill="#917f5c" stroke="#f6dc8e" stroke-opacity=".8"/>
<rect x="664.500" y="237.500" width="2" height="4" fill="#917f5c" stroke="#f6dc8e" stroke-opacity=".8"/>
<rect x="654.500" y="229.500" width="4" height="4" fill="#684a3e" stroke="#f6dc8e" stroke-opacity=".8"/>
<rect x="789.500" y="191.500" width="3" height="3" fill="#917f5c" stroke="#f6dc8e" stroke-opacity=".8"/>
<rect x="888.500" y="203.500" width="3" height="3" fill="#917f5c" stroke="#f6dc8e" stroke-opacity=".8"/>
<rect x="883.500" y="269.500" width="3" height="4" fill="#917f5c" stroke="#f6dc8e" stroke-opacity=".8"/>
<rect x="833.500" y="172.500" width="4" height="5" fill="#684a3e" stroke="#f6dc8e" stroke-opacity=".8"/>
<rect x="876.500" y="280.500" width="4" height="5" fill="#917f5c" stroke="#f6dc8e" stroke-opacity=".8"/>
<rect x="660.500" y="209.500" width="3" height="3" fill="#684a3e" stroke="#f6dc8e" stroke-opacity=".8"/>
<rect x="831.500" y="175.500" width="4" height="3" fill="#684a3e" stroke="#f6dc8e" stroke-opacity=".8"/>
<rect x="894.500" y="250.500" width="2" height="5" fill="#917f5c" stroke="#f6dc8e" stroke-opacity=".8"/>
<rect x="669.500" y="245.500" width="2" height="3" fill="#917f5c" stroke="#f6dc8e" stroke-opacity=".8"/>
<rect x="840.500" y="180.500" width="2" height="4" fill="#684a3e" stroke="#f6dc8e" stroke-opacity=".8"/>
<rect x="817.500" y="205.500" width="3" height="4" fill="#684a3e" stroke="#f6dc8e" stroke-opacity=".8"/>
<rect x="821.500" y="206.500" width="4" height="4" fill="#684a3e" stroke="#f6dc8e" stroke-opacity=".8"/>
<rect x="685.500" y="268.500" width="3" height="5" fill="#917f5c" stroke="#f6dc8e" stroke-opacity=".8"/>
<rect x="664.500" y="248.500" width="3" height="4" fill="#684a3e" stroke="#f6dc8e" stroke-opacity=".8"/>
<rect x="669.500" y="258.500" width="4" height="4" fill="#684a3e" stroke="#f6dc8e" stroke-opacity=".8"/>
<rect x="684.500" y="186.500" width="4" height="5" fill="#684a3e" stroke="#f6dc8e" stroke-opacity=".8"/>
<rect x="687.500" y="284.500" width="2" height="4" fill="#684a3e" stroke="#f6dc8e" stroke-opacity=".8"/>
<rect x="884.500" y="197.500" width="4" height="3" fill="#917f5c" stroke="#f6dc8e" stroke-opacity=".8"/>
<rect x="670.500" y="199.500" width="4" height="4" fill="#684a3e" stroke="#f6dc8e" stroke-opacity=".8"/>
<rect x="849.500" y="184.500" width="3" height="4" fill="#917f5c" stroke="#f6dc8e" stroke-opacity=".8"/>
<rect x="824.500" y="172.500" width="4" height="4" fill="#684a3e" stroke="#f6dc8e" stroke-opacity=".8"/>
<rect x="653.500" y="229.500" width="2" height="5" fill="#684a3e" stroke="#f6dc8e" stroke-opacity=".8"/>
<rect x="671.500" y="194.500" width="3" height="4" fill="#684a3e" stroke="#f6dc8e" stroke-opacity=".8"/>
<rect x="889.500" y="191.500" width="3" height="3" fill="#684a3e" stroke="#f6dc8e" stroke-opacity=".8"/>
<rect x="887.500" y="199.500" width="4" height="4" fill="#917f5c" stroke="#f6dc8e" stroke-opacity=".8"/>
<rect x="843.500" y="189.500" width="3" height="3" fill="#684a3e" stroke="#f6dc8e" stroke-opacity=".8"/>
<rect x="895.500" y="228.500" width="4" height="5" fill="#917f5c" stroke="#f6dc8e" stroke-opacity=".8"/>
<rect x="891.500" y="266.500" width="2" height="3" fill="#684a3e" stroke="#f6dc8e" stroke-opacity=".8"/>
<rect x="882.500" y="282.500" width="4" height="4" fill="#684a3e" stroke="#f6dc8e" stroke-opacity=".8"/>
<rect x="819.500" y="215.500" width="4" height="3" fill="#917f5c" stroke="#f6dc8e" stroke-opacity=".8"/>
<rect x="903.500" y="233.500" width="4" height="3" fill="#684a3e" stroke="#f6dc8e" stroke-opacity=".8"/>
<rect x="651.500" y="226.500" width="3" height="3" fill="#684a3e" stroke="#f6dc8e" stroke-opacity=".8"/>
<rect x="695.500" y="178.500" width="4" height="3" fill="#684a3e" stroke="#f6dc8e" stroke-opacity=".8"/>
<rect x="663.500" y="236.500" width="4" height="3" fill="#917f5c" stroke="#f6dc8e" stroke-opacity=".8"/>
<rect x="902.500" y="235.500" width="2" height="4" fill="#684a3e" stroke="#f6dc8e" stroke-opacity=".8"/>
<rect x="903.500" y="236.500" width="4" height="4" fill="#684a3e" stroke="#f6dc8e" stroke-opacity=".8"/>
<rect x="840.500" y="179.500" width="4" height="4" fill="#684a3e" stroke="#f6dc8e" stroke-opacity=".8"/>
<rect x="793.500" y="197.500" width="4" height="5" fill="#917f5c" stroke="#f6dc8e" stroke-opacity=".8"/>
<rect x="673.500" y="254.500" width="2" height="4" fill="#917f5c" stroke="#f6dc8e" stroke-opacity=".8"/>
<rect x="876.500" y="290.500" width="4" height="4" fill="#917f5c" stroke="#f6dc8e" stroke-opacity=".8"/>
<rect x="881.500" y="273.500" width="3" height="4" fill="#917f5c" stroke="#f6dc8e" stroke-opacity=".8"/>
<rect x="824.500" y="165.500" width="3" height="3" fill="#684a3e" stroke="#f6dc8e" stroke-opacity=".8"/>
<rect x="902.500" y="243.500" width="3" height="4" fill="#684a3e" stroke="#f6dc8e" stroke-opacity=".8"/>
<rect x="900.500" y="201.500" width="2" height="5" fill="#684a3e" stroke="#f6dc8e" stroke-opacity=".8"/>
<rect x="891.500" y="252.500" width="4" height="3" fill="#917f5c" stroke="#f6dc8e" stroke-opacity=".8"/>
<rect x="899.500" y="246.500" width="4" height="4" fill="#684a3e" stroke="#f6dc8e" stroke-opacity=".8"/>
<rect x="798.500" y="203.500" width="2" height="3" fill="#917f5c" stroke="#f6dc8e" stroke-opacity=".8"/>
<rect x="835.500" y="191.500" width="4" height="3" fill="#684a3e" stroke="#f6dc8e" stroke-opacity=".8"/>
<rect x="834.500" y="199.500" width="2" height="3" fill="#917f5c" stroke="#f6dc8e" stroke-opacity=".8"/>
<rect x="891.500" y="210.500" width="4" height="4" fill="#917f5c" stroke="#f6dc8e" stroke-opacity=".8"/>
<rect x="695.500" y="286.500" width="2" height="5" fill="#917f5c" stroke="#f6dc8e" stroke-opacity=".8"/>
<rect x="670.500" y="245.500" width="3" height="4" fill="#917f5c" stroke="#f6dc8e" stroke-opacity=".8"/>
<rect x="900.500" y="241.500" width="3" height="4" fill="#684a3e" stroke="#f6dc8e" stroke-opacity=".8"/>
<rect x="903.500" y="239.500" width="4" height="5" fill="#684a3e" stroke="#f6dc8e" stroke-opacity=".8"/>
<rect x="803.500" y="214.500" width="4" height="5" fill="#917f5c" stroke="#f6dc8e" stroke-opacity=".8"/>
<rect x="899.500" y="249.500" width="3" height="4" fill="#684a3e" stroke="#f6dc8e" stroke-opacity=".8"/>
<rect x="882.500" y="268.500" width="3" height="4" fill="#917f5c" stroke="#f6dc8e" stroke-opacity=".8"/>
<rect x="673.500" y="202.500" width="3" height="4" fill="#917f5c" stroke="#f6dc8e" stroke-opacity=".8"/>
<rect x="904.500" y="235.500" width="4" height="5" fill="#684a3e" stroke="#f6dc8e" stroke-opacity=".8"/>
<rect x="695.500" y="178.500" width="4" height="3" fill="#684a3e" stroke="#f6dc8e" stroke-opacity=".8"/>
<rect x="791.500" y="201.500" width="4" height="4" fill="#917f5c" stroke="#f6dc8e" stroke-opacity=".8"/>
<rect x="901.500" y="205.500" width="4" height="5" fill="#684a3e" stroke="#f6dc8e" stroke-opacity=".8"/>
<rect x="654.500" y="214.500" width="4" height="4" fill="#684a3e" stroke="#f6dc8e" stroke-opacity=".8"/>
<rect x="841.500" y="186.500" width="4" height="4" fill="#684a3e" stroke="#f6dc8e" stroke-opacity=".8"/>
<rect x="667.500" y="201.500" width="4" height="3" fill="#684a3e" stroke="#f6dc8e" stroke-opacity=".8"/>
<rect x="795.500" y="193.500" width="4" height="3" fill="#684a3e" stroke="#f6dc8e" stroke-opacity=".8"/>
<rect x="667.500" y="253.500" width="2" height="4" fill="#684a3e" stroke="#f6dc8e" stroke-opacity=".8"/>
<rect x="898.500" y="234.500" width="4" height="4" fill="#917f5c" stroke="#f6dc8e" stroke-opacity=".8"/>
<rect x="667.500" y="211.500" width="4" height="5" fill="#917f5c" stroke="#f6dc8e" stroke-opacity=".8"/>
<rect x="782.500" y="186.500" width="4" height="4" fill="#684a3e" stroke="#f6dc8e" stroke-opacity=".8"/>
<rect x="885.500" y="197.500" width="2" height="5" fill="#917f5c" stroke="#f6dc8e" stroke-opacity=".8"/>
<rect x="897.500" y="240.500" width="4" height="3" fill="#917f5c" stroke="#f6dc8e" stroke-opacity=".8"/>
<rect x="894.500" y="234.500" width="3" height="4" fill="#917f5c" stroke="#f6dc8e" stroke-opacity=".8"/>
<rect x="843.500" y="189.500" width="2" height="5" fill="#684a3e" stroke="#f6dc8e" stroke-opacity=".8"/>
<rect x="826.500" y="212.500" width="3" height="3" fill="#917f5c" stroke="#f6dc8e" stroke-opacity=".8"/>
<rect x="826.500" y="170.500" width="3" height="3" fill="#684a3e" stroke="#f6dc8e" stroke-opacity=".8"/>
<rect x="671.500" y="259.500" width="4" height="3" fill="#684a3e" stroke="#f6dc8e" stroke-opacity=".8"/>
<rect x="687.500" y="183.500" width="4" height="4" fill="#684a3e" stroke="#f6dc8e" stroke-opacity=".8"/>
<rect x="825.500" y="174.500" width="3" height="5" fill="#684a3e" stroke="#f6dc8e" stroke-opacity=".8"/>
<rect x="670.500" y="204.500" width="2" height="4" fill="#917f5c" stroke="#f6dc8e" stroke-opacity=".8"/>
<rect x="899.500" y="216.500" width="4" height="3" fill="#684a3e" stroke="#f6dc8e" stroke-opacity=".8"/>
<rect x="844.500" y="191.500" width="4" height="5" fill="#684a3e" stroke="#f6dc8e" stroke-opacity=".8"/>
<rect x="666.500" y="208.500" width="4" height="3" fill="#917f5c" stroke="#f6dc8e" stroke-opacity=".8"/>
<rect x="695.500" y="179.500" width="4" height="4" fill="#684a3e" stroke="#f6dc8e" stroke-opacity=".8"/>
<rect x="792.500" y="197.500" width="2" height="4" fill="#917f5c" stroke="#f6dc8e" stroke-opacity=".8"/>
<rect x="794.500" y="191.500" width="3" height="4" fill="#684a3e" stroke="#f6dc8e" stroke-opacity=".8"/>
<rect x="885.500" y="199.500" width="4" height="4" fill="#917f5c" stroke="#f6dc8e" stroke-opacity=".8"/>
<rect x="808.500" y="195.500" width="4" height="3" fill="#684a3e" stroke="#f6dc8e" stroke-opacity=".8"/>
<rect x="833.500" y="204.500" width="4" height="3" fill="#917f5c" stroke="#f6dc8e" stroke-opacity=".8"/>
<rect x="678.500" y="271.500" width="3" height="3" fill="#684a3e" stroke="#f6dc8e" stroke-opacity=".8"/>
<rect x="810.500" y="205.500" width="4" height="4" fill="#684a3e" stroke="#f6dc8e" stroke-opacity=".8"/>
<rect x="659.500" y="223.500" width="4" height="3" fill="#917f5c" stroke="#f6dc8e" stroke-opacity=".8"/>
<rect x="657.500" y="239.500" width="4" height="4" fill="#684a3e" stroke="#f6dc8e" stroke-opacity=".8"/>
<rect x="893.500" y="209.500" width="4" height="4" fill="#917f5c" stroke="#f6dc8e" stroke-opacity=".8"/>
<rect x="678.500" y="272.500" width="2" height="4" fill="#684a3e" stroke="#f6dc8e" stroke-opacity=".8"/>
<rect x="807.500" y="199.500" width="3" height="4" fill="#684a3e" stroke="#f6dc8e" stroke-opacity=".8"/>
<rect x="834.500" y="197.500" width="2" height="4" fill="#917f5c" stroke="#f6dc8e" stroke-opacity=".8"/>
<rect x="876.500" y="177.500" width="2" height="3" fill="#684a3e" stroke="#f6dc8e" stroke-opacity=".8"/>
<rect x="889.500" y="193.500" width="3" height="3" fill="#684a3e" stroke="#f6dc8e" stroke-opacity=".8"/>
<rect x="805.500" y="216.500" width="3" height="4" fill="#917f5c" stroke="#f6dc8e" stroke-opacity=".8"/>
<rect x="882.500" y="273.500" width="2" height="4" fill="#917f5c" stroke="#f6dc8e" stroke-opacity=".8"/>
<rect x="895.500" y="260.500" width="4" height="4" fill="#684a3e" stroke="#f6dc8e" stroke-opacity=".8"/>
<rect x="835.500" y="174.500" width="2" height="3" fill="#684a3e" stroke="#f6dc8e" stroke-opacity=".8"/>
<rect x="671.500" y="247.500" width="3" height="4" fill="#917f5c" stroke="#f6dc8e" stroke-opacity=".8"/>
<rect x="788.500" y="297.500" width="3" height="3" fill="#917f5c" stroke="#f6dc8e" stroke-opacity=".8"/>
<rect x="881.500" y="271.500" width="4" height="4" fill="#917f5c" stroke="#f6dc8e" stroke-opacity=".8"/>
<rect x="811.500" y="217.500" width="2" height="4" fill="#917f5c" stroke="#f6dc8e" stroke-opacity=".8"/>
<rect x="666.500" y="257.500" width="4" height="4" fill="#684a3e" stroke="#f6dc8e" stroke-opacity=".8"/>
<rect x="901.500" y="222.500" width="3" height="4" fill="#684a3e" stroke="#f6dc8e" stroke-opacity=".8"/>
<rect x="839.500" y="197.500" width="4" height="3" fill="#917f5c" stroke="#f6dc8e" stroke-opacity=".8"/>
<rect x="883.500" y="186.500" width="3" height="3" fill="#684a3e" stroke="#f6dc8e" stroke-opacity=".8"/>
<rect x="882.500" y="182.500" width="3" height="4" fill="#684a3e" stroke="#f6dc8e" stroke-opacity=".8"/>
<rect x="896.500" y="217.500" width="2" height="5" fill="#917f5c" stroke="#f6dc8e" stroke-opacity=".8"/>
<rect x="697.500" y="290.500" width="3" height="3" fill="#917f5c" stroke="#f6dc8e" stroke-opacity=".8"/>
<rect x="655.500" y="230.500" width="4" height="4" fill="#684a3e" stroke="#f6dc8e" stroke-opacity=".8"/>
<rect x="679.500" y="260.500" width="2" height="3" fill="#917f5c" stroke="#f6dc8e" stroke-opacity=".8"/>
<rect x="893.500" y="224.500" width="4" height="4" fill="#917f5c" stroke="#f6dc8e" stroke-opacity=".8"/>
<rect x="893.500" y="242.500" width="4" height="5" fill="#917f5c" stroke="#f6dc8e" stroke-opacity=".8"/>
<rect x="877.500" y="293.500" width="4" height="4" fill="#917f5c" stroke="#f6dc8e" stroke-opacity=".8"/>
<rect x="679.500" y="277.500" width="3" height="5" fill="#684a3e" stroke="#f6dc8e" stroke-opacity=".8"/>
<rect x="656.500" y="236.500" width="3" height="4" fill="#684a3e" stroke="#f6dc8e" stroke-opacity=".8"/>
<rect x="881.500" y="292.500" width="3" height="5" fill="#684a3e" stroke="#f6dc8e" stroke-opacity=".8"/>
<rect x="898.500" y="247.500" width="4" height="4" fill="#684a3e" stroke="#f6dc8e" stroke-opacity=".8"/>
<rect x="883.500" y="199.500" width="3" height="5" fill="#917f5c" stroke="#f6dc8e" stroke-opacity=".8"/>
<rect x="807.500" y="218.500" width="3" height="3" fill="#917f5c" stroke="#f6dc8e" stroke-opacity=".8"/>
<rect x="824.500" y="201.500" width="4" height="4" fill="#684a3e" stroke="#f6dc8e" stroke-opacity=".8"/>
<rect x="822.500" y="206.500" width="2" height="3" fill="#684a3e" stroke="#f6dc8e" stroke-opacity=".8"/>
<rect x="817.500" y="211.500" width="4" height="5" fill="#684a3e" stroke="#f6dc8e" stroke-opacity=".8"/>
<rect x="687.500" y="184.500" width="2" height="3" fill="#684a3e" stroke="#f6dc8e" stroke-opacity=".8"/>
<rect x="806.500" y="219.500" width="2" height="3" fill="#917f5c" stroke="#f6dc8e" stroke-opacity=".8"/>
<rect x="812.500" y="207.500" width="3" height="5" fill="#684a3e" stroke="#f6dc8e" stroke-opacity=".8"/>
<rect x="875.500" y="283.500" width="4" height="4" fill="#917f5c" stroke="#f6dc8e" stroke-opacity=".8"/>
<rect x="668.500" y="245.500" width="4" height="3" fill="#917f5c" stroke="#f6dc8e" stroke-opacity=".8"/>
<rect x="803.500" y="208.500" width="3" height="4" fill="#917f5c" stroke="#f6dc8e" stroke-opacity=".8"/>
<rect x="845.500" y="176.500" width="2" height="4" fill="#917f5c" stroke="#f6dc8e" stroke-opacity=".8"/>
<rect x="688.500" y="289.500" width="4" height="3" fill="#684a3e" stroke="#f6dc8e" stroke-opacity=".8"/>
<rect x="675.500" y="258.500" width="4" height="4" fill="#917f5c" stroke="#f6dc8e" stroke-opacity=".8"/>
<rect x="801.500" y="204.500" width="3" height="5" fill="#917f5c" stroke="#f6dc8e" stroke-opacity=".8"/>
<rect x="782.500" y="299.500" width="3" height="4" fill="#917f5c" stroke="#f6dc8e" stroke-opacity=".8"/>
<rect x="654.500" y="230.500" width="4" height="3" fill="#684a3e" stroke="#f6dc8e" stroke-opacity=".8"/>
<rect x="683.500" y="269.500" width="4" height="5" fill="#917f5c" stroke="#f6dc8e" stroke-opacity=".8"/>
<rect x="816.500" y="223.500" width="4" height="3" fill="#917f5c" stroke="#f6dc8e" stroke-opacity=".8"/>
<rect x="895.500" y="259.500" width="4" height="4" fill="#684a3e" stroke="#f6dc8e" stroke-opacity=".8"/>
<polygon points="690.8,107.6 693.0,103.0 697.0,100.6 707.5,100.6 711.0,104.0 712.8,107.6 716.3,112.9 717.0,118.0 720.0,122.0 719.0,128.0 722.0,131.0 725.0,136.0 724.0,142.0 719.0,140.0 716.0,144.0 712.0,146.0 709.0,141.0 705.0,139.0 703.0,135.0 700.0,137.0 697.0,133.0 694.0,130.0 692.0,124.0 690.5,118.0" fill="#55788a" stroke="#72c2e6" stroke-width="1" stroke-linejoin="round" />
<polygon points="835.0,128.0 838.0,123.0 846.0,119.0 850.0,113.0 857.0,106.0 862.0,101.0 868.0,98.5 874.0,98.5 879.0,101.0 882.5,107.6 883.4,116.4 886.0,124.0 886.0,132.0 882.0,136.0 875.0,137.0 869.0,139.0 863.0,136.0 858.0,140.0 853.0,136.0 849.0,139.0 845.0,135.0 840.0,137.0 836.0,134.0" fill="#55788a" stroke="#72c2e6" stroke-width="1" stroke-linejoin="round" />
<rect x="699" y="110" width="4" height="9" fill="#748f78" stroke="#72c2e6" stroke-width=".8"/>
<rect x="704" y="118" width="3" height="8" fill="#748f78" stroke="#72c2e6" stroke-width=".8"/>
<rect x="712" y="124" width="3" height="5" fill="#748f78" stroke="#72c2e6" stroke-width=".8"/>
<rect x="858" y="118" width="4" height="8" fill="#748f78" stroke="#72c2e6" stroke-width=".8"/>
<rect x="852" y="126" width="5" height="4" fill="#748f78" stroke="#72c2e6" stroke-width=".8"/>
<rect x="866" y="128" width="3" height="6" fill="#748f78" stroke="#72c2e6" stroke-width=".8"/>
<rect x="878" y="112" width="3" height="8" fill="#748f78" stroke="#72c2e6" stroke-width=".8"/>
<rect x="724" y="146" width="5" height="3" fill="#55788a" stroke="#72c2e6" stroke-width=".8"/>
<rect x="718" y="150" width="6" height="2" fill="#55788a" stroke="#72c2e6" stroke-width=".8"/>
<rect x="728" y="138" width="3" height="4" fill="#55788a" stroke="#72c2e6" stroke-width=".8"/>
<rect x="714" y="148" width="3" height="3" fill="#55788a" stroke="#72c2e6" stroke-width=".8"/>
<rect x="846" y="141" width="6" height="2" fill="#55788a" stroke="#72c2e6" stroke-width=".8"/>
<rect x="872" y="141" width="4" height="3" fill="#55788a" stroke="#72c2e6" stroke-width=".8"/>
<text x="574" y="316" class="serif" style="font-size:15.200px" fill="#fff" opacity=".28">B: 7: t1_fl3d_nonfs_tra_dyn</text>
</svg>
<svg class="a" style="left:570px;top:401px" width="435" height="279" viewBox="570 401 435 279" shape-rendering="crispEdges">
<rect x="576" y="404" width="426" height="241" fill="#0e0e0e"/>
<polygon points="950,404 987,404 998,510 990,645 963,645" fill="#181818"/>
<polygon points="784.9,404.0 787.6,404.0 788.5,412.8 778.4,429.4 767.4,445.9 758.3,460.6 749.1,477.1 742.7,491.7 741.7,510.1 743.6,525.0 749.2,539.1 756.9,563.9 764.5,583.0 770.2,602.1 773.1,611.6 772.1,630.7 768.3,636.4 760.7,644.5 760.7,626.9 755.0,620.2 741.6,611.6 734.0,602.1 724.4,584.9 714.9,573.4 705.3,562.9 700.0,545.0 695.0,520.0 695.9,504.6 712.4,486.2 730.7,466.0 749.1,445.9 767.4,425.7" fill="#7f9e84" stroke="#8fc890" stroke-width="1" stroke-linejoin="round" />
<polygon points="787.6,404.0 836.2,404.0 833.5,418.3 822.5,433.0 811.5,445.9 802.3,455.0 796.8,466.0 793.1,478.9 787.6,495.4 785.8,506.4 780.3,513.8 779.8,520.0 777.9,535.3 789.3,531.5 783.6,544.8 774.0,554.4 783.6,550.5 802.7,544.8 798.9,554.4 795.0,567.7 791.2,586.8 789.3,605.9 793.1,619.2 808.4,626.9 812.2,634.5 802.7,638.3 801.7,644.5 760.7,644.5 768.3,636.4 772.1,630.7 773.1,611.6 770.2,602.1 764.5,583.0 756.9,563.9 749.2,539.1 743.6,525.0 741.7,510.1 742.7,491.7 749.1,477.1 758.3,460.6 767.4,445.9 778.4,429.4 788.5,412.8" fill="#917f5c" stroke="#f6dc8e" stroke-width="1" stroke-linejoin="round" />
<g fill="none" stroke="#b5a47a" stroke-linecap="round" opacity=".6" shape-rendering="auto"><path d="M806 410c-10 30-22 60-28 100c-4 30-6 60-4 90" stroke-width="2.500"/><path d="M796 430c-8 24-16 50-20 80" stroke-width="1.500"/></g>
<polygon points="836.2,404.0 950.1,404.0 944.6,422.0 948.3,455.0 950.1,484.4 957.5,517.5 963.0,554.2 966.7,583.6 964.8,620.3 963.0,644.5 801.7,644.5 802.7,638.3 812.2,634.5 808.4,626.9 793.1,619.2 789.3,605.9 791.2,586.8 795.0,567.7 798.9,554.4 802.7,544.8 783.6,550.5 774.0,554.4 783.6,544.8 789.3,531.5 777.9,535.3 779.8,520.0 780.3,513.8 785.8,506.4 787.6,495.4 793.1,478.9 796.8,466.0 802.3,455.0 811.5,445.9 822.5,433.0 833.5,418.3" fill="#684a3e" stroke="#d48c6c" stroke-width="1" stroke-linejoin="round" />
<rect x="788.500" y="619.500" width="4" height="3" fill="#684a3e" stroke="#f6dc8e" stroke-opacity=".8"/>
<rect x="806.500" y="544.500" width="4" height="4" fill="#917f5c" stroke="#f6dc8e" stroke-opacity=".8"/>
<rect x="783.500" y="516.500" width="3" height="3" fill="#917f5c" stroke="#f6dc8e" stroke-opacity=".8"/>
<rect x="827.500" y="434.500" width="3" height="4" fill="#917f5c" stroke="#f6dc8e" stroke-opacity=".8"/>
<rect x="792.500" y="488.500" width="4" height="4" fill="#917f5c" stroke="#f6dc8e" stroke-opacity=".8"/>
<rect x="790.500" y="479.500" width="3" height="3" fill="#684a3e" stroke="#f6dc8e" stroke-opacity=".8"/>
<rect x="808.500" y="445.500" width="4" height="4" fill="#684a3e" stroke="#f6dc8e" stroke-opacity=".8"/>
<rect x="803.500" y="448.500" width="4" height="4" fill="#684a3e" stroke="#f6dc8e" stroke-opacity=".8"/>
<rect x="782.500" y="520.500" width="4" height="4" fill="#917f5c" stroke="#f6dc8e" stroke-opacity=".8"/>
<rect x="800.500" y="566.500" width="4" height="5" fill="#917f5c" stroke="#f6dc8e" stroke-opacity=".8"/>
<rect x="814.500" y="446.500" width="4" height="4" fill="#917f5c" stroke="#f6dc8e" stroke-opacity=".8"/>
<rect x="788.500" y="501.500" width="2" height="5" fill="#917f5c" stroke="#f6dc8e" stroke-opacity=".8"/>
<rect x="774.500" y="548.500" width="2" height="4" fill="#684a3e" stroke="#f6dc8e" stroke-opacity=".8"/>
<rect x="806.500" y="628.500" width="3" height="4" fill="#684a3e" stroke="#f6dc8e" stroke-opacity=".8"/>
<rect x="800.500" y="452.500" width="3" height="4" fill="#684a3e" stroke="#f6dc8e" stroke-opacity=".8"/>
<rect x="791.500" y="619.500" width="4" height="3" fill="#684a3e" stroke="#f6dc8e" stroke-opacity=".8"/>
<rect x="794.500" y="604.500" width="3" height="4" fill="#917f5c" stroke="#f6dc8e" stroke-opacity=".8"/>
<rect x="790.500" y="622.500" width="3" height="4" fill="#684a3e" stroke="#f6dc8e" stroke-opacity=".8"/>
<rect x="773.500" y="559.500" width="4" height="3" fill="#684a3e" stroke="#f6dc8e" stroke-opacity=".8"/>
<rect x="789.500" y="587.500" width="4" height="3" fill="#684a3e" stroke="#f6dc8e" stroke-opacity=".8"/>
<rect x="792.500" y="564.500" width="4" height="3" fill="#684a3e" stroke="#f6dc8e" stroke-opacity=".8"/>
<rect x="798.500" y="619.500" width="4" height="4" fill="#917f5c" stroke="#f6dc8e" stroke-opacity=".8"/>
<rect x="783.500" y="506.500" width="4" height="4" fill="#684a3e" stroke="#f6dc8e" stroke-opacity=".8"/>
<rect x="797.500" y="472.500" width="4" height="4" fill="#917f5c" stroke="#f6dc8e" stroke-opacity=".8"/>
<rect x="814.500" y="633.500" width="4" height="5" fill="#917f5c" stroke="#f6dc8e" stroke-opacity=".8"/>
<rect x="820.500" y="432.500" width="3" height="4" fill="#684a3e" stroke="#f6dc8e" stroke-opacity=".8"/>
<rect x="784.500" y="535.500" width="4" height="4" fill="#684a3e" stroke="#f6dc8e" stroke-opacity=".8"/>
<rect x="795.500" y="551.500" width="2" height="4" fill="#684a3e" stroke="#f6dc8e" stroke-opacity=".8"/>
<rect x="804.500" y="457.500" width="2" height="4" fill="#917f5c" stroke="#f6dc8e" stroke-opacity=".8"/>
<rect x="786.500" y="599.500" width="3" height="4" fill="#684a3e" stroke="#f6dc8e" stroke-opacity=".8"/>
<rect x="794.500" y="600.500" width="3" height="4" fill="#917f5c" stroke="#f6dc8e" stroke-opacity=".8"/>
<rect x="789.500" y="552.500" width="3" height="4" fill="#684a3e" stroke="#f6dc8e" stroke-opacity=".8"/>
<rect x="797.500" y="476.500" width="4" height="4" fill="#917f5c" stroke="#f6dc8e" stroke-opacity=".8"/>
<rect x="775.500" y="547.500" width="4" height="4" fill="#684a3e" stroke="#f6dc8e" stroke-opacity=".8"/>
<rect x="775.500" y="533.500" width="4" height="4" fill="#684a3e" stroke="#f6dc8e" stroke-opacity=".8"/>
<polygon points="950.1,404.4 955.6,414.7 964.8,447.7 972.2,484.4 974.0,506.5 970.3,539.5 963.0,554.2 957.5,517.5 950.1,484.4 948.3,455.0 944.6,422.0" fill="#4c6a52" stroke="#8cc08c" stroke-width="1" stroke-linejoin="round" />
<rect x="968.500" y="597.500" width="4" height="4" fill="#684a3e" stroke="#c08a70" stroke-opacity=".8"/>
<rect x="941.500" y="440.500" width="4" height="4" fill="#4c6a52" stroke="#c08a70" stroke-opacity=".8"/>
<rect x="974.500" y="576.500" width="3" height="3" fill="#684a3e" stroke="#c08a70" stroke-opacity=".8"/>
<rect x="959.500" y="564.500" width="3" height="4" fill="#4c6a52" stroke="#c08a70" stroke-opacity=".8"/>
<rect x="959.500" y="593.500" width="3" height="5" fill="#4c6a52" stroke="#c08a70" stroke-opacity=".8"/>
<rect x="968.500" y="565.500" width="4" height="4" fill="#684a3e" stroke="#c08a70" stroke-opacity=".8"/>
<rect x="954.500" y="464.500" width="4" height="3" fill="#684a3e" stroke="#c08a70" stroke-opacity=".8"/>
<rect x="966.500" y="569.500" width="3" height="3" fill="#684a3e" stroke="#c08a70" stroke-opacity=".8"/>
<rect x="963.500" y="568.500" width="4" height="3" fill="#4c6a52" stroke="#c08a70" stroke-opacity=".8"/>
<rect x="955.500" y="489.500" width="2" height="3" fill="#684a3e" stroke="#c08a70" stroke-opacity=".8"/>
<rect x="958.500" y="563.500" width="3" height="3" fill="#4c6a52" stroke="#c08a70" stroke-opacity=".8"/>
<rect x="969.500" y="609.500" width="4" height="3" fill="#684a3e" stroke="#c08a70" stroke-opacity=".8"/>
<rect x="963.500" y="535.500" width="4" height="4" fill="#684a3e" stroke="#c08a70" stroke-opacity=".8"/>
<rect x="964.500" y="519.500" width="3" height="4" fill="#684a3e" stroke="#c08a70" stroke-opacity=".8"/>
<rect x="961.500" y="638.500" width="2" height="4" fill="#4c6a52" stroke="#c08a70" stroke-opacity=".8"/>
<rect x="971.500" y="561.500" width="4" height="4" fill="#684a3e" stroke="#c08a70" stroke-opacity=".8"/>
<rect x="964.500" y="511.500" width="4" height="3" fill="#684a3e" stroke="#c08a70" stroke-opacity=".8"/>
<rect x="952.500" y="526.500" width="4" height="4" fill="#4c6a52" stroke="#c08a70" stroke-opacity=".8"/>
<rect x="945.500" y="494.500" width="3" height="5" fill="#4c6a52" stroke="#c08a70" stroke-opacity=".8"/>
<rect x="954.500" y="519.500" width="3" height="4" fill="#4c6a52" stroke="#c08a70" stroke-opacity=".8"/>
<rect x="960.500" y="551.500" width="2" height="3" fill="#4c6a52" stroke="#c08a70" stroke-opacity=".8"/>
<rect x="961.500" y="504.500" width="4" height="4" fill="#684a3e" stroke="#c08a70" stroke-opacity=".8"/>
<rect x="943.500" y="460.500" width="3" height="4" fill="#4c6a52" stroke="#c08a70" stroke-opacity=".8"/>
<rect x="949.500" y="480.500" width="2" height="5" fill="#4c6a52" stroke="#c08a70" stroke-opacity=".8"/>
<rect x="963.500" y="572.500" width="2" height="5" fill="#4c6a52" stroke="#c08a70" stroke-opacity=".8"/>
<rect x="957.500" y="574.500" width="2" height="5" fill="#4c6a52" stroke="#c08a70" stroke-opacity=".8"/>
<rect x="962.500" y="620.500" width="3" height="4" fill="#4c6a52" stroke="#c08a70" stroke-opacity=".8"/>
<rect x="969.500" y="558.500" width="4" height="5" fill="#684a3e" stroke="#c08a70" stroke-opacity=".8"/>
<rect x="955.500" y="536.500" width="4" height="5" fill="#4c6a52" stroke="#c08a70" stroke-opacity=".8"/>
<rect x="960.500" y="599.500" width="3" height="4" fill="#4c6a52" stroke="#c08a70" stroke-opacity=".8"/>
<rect x="941.500" y="426.500" width="4" height="5" fill="#4c6a52" stroke="#c08a70" stroke-opacity=".8"/>
<rect x="947.500" y="506.500" width="2" height="3" fill="#4c6a52" stroke="#c08a70" stroke-opacity=".8"/>
<rect x="959.500" y="514.500" width="4" height="5" fill="#684a3e" stroke="#c08a70" stroke-opacity=".8"/>
<rect x="943.500" y="423.500" width="4" height="3" fill="#4c6a52" stroke="#c08a70" stroke-opacity=".8"/>
<rect x="958.500" y="603.500" width="3" height="3" fill="#4c6a52" stroke="#c08a70" stroke-opacity=".8"/>
<rect x="967.500" y="636.500" width="4" height="4" fill="#684a3e" stroke="#c08a70" stroke-opacity=".8"/>
<rect x="959.500" y="603.500" width="3" height="5" fill="#4c6a52" stroke="#c08a70" stroke-opacity=".8"/>
<rect x="943.500" y="409.500" width="4" height="3" fill="#4c6a52" stroke="#c08a70" stroke-opacity=".8"/>
<rect x="944.500" y="491.500" width="2" height="3" fill="#4c6a52" stroke="#c08a70" stroke-opacity=".8"/>
<rect x="959.500" y="588.500" width="3" height="4" fill="#4c6a52" stroke="#c08a70" stroke-opacity=".8"/>
<rect x="943.500" y="424.500" width="4" height="3" fill="#4c6a52" stroke="#c08a70" stroke-opacity=".8"/>
<rect x="944.500" y="432.500" width="3" height="3" fill="#4c6a52" stroke="#c08a70" stroke-opacity=".8"/>
<rect x="969.500" y="636.500" width="4" height="5" fill="#684a3e" stroke="#c08a70" stroke-opacity=".8"/>
<rect x="963.500" y="530.500" width="4" height="3" fill="#684a3e" stroke="#c08a70" stroke-opacity=".8"/>
<rect x="958.500" y="576.500" width="4" height="5" fill="#4c6a52" stroke="#c08a70" stroke-opacity=".8"/>
<rect x="952.500" y="526.500" width="4" height="4" fill="#4c6a52" stroke="#c08a70" stroke-opacity=".8"/>
<rect x="952.500" y="413.500" width="3" height="3" fill="#684a3e" stroke="#c08a70" stroke-opacity=".8"/>
<rect x="958.500" y="599.500" width="3" height="4" fill="#4c6a52" stroke="#c08a70" stroke-opacity=".8"/>
<rect x="947.500" y="510.500" width="3" height="4" fill="#4c6a52" stroke="#c08a70" stroke-opacity=".8"/>
<rect x="940.500" y="443.500" width="3" height="4" fill="#4c6a52" stroke="#c08a70" stroke-opacity=".8"/>
<rect x="954.500" y="519.500" width="4" height="5" fill="#4c6a52" stroke="#c08a70" stroke-opacity=".8"/>
<rect x="959.500" y="591.500" width="3" height="5" fill="#4c6a52" stroke="#c08a70" stroke-opacity=".8"/>
<rect x="972.500" y="608.500" width="2" height="4" fill="#684a3e" stroke="#c08a70" stroke-opacity=".8"/>
<rect x="955.500" y="480.500" width="3" height="4" fill="#684a3e" stroke="#c08a70" stroke-opacity=".8"/>
<rect x="961.500" y="563.500" width="3" height="3" fill="#4c6a52" stroke="#c08a70" stroke-opacity=".8"/>
<rect x="954.500" y="550.500" width="3" height="5" fill="#4c6a52" stroke="#c08a70" stroke-opacity=".8"/>
<rect x="943.500" y="494.500" width="3" height="3" fill="#4c6a52" stroke="#c08a70" stroke-opacity=".8"/>
<rect x="958.500" y="627.500" width="4" height="4" fill="#4c6a52" stroke="#c08a70" stroke-opacity=".8"/>
<rect x="953.500" y="637.500" width="4" height="4" fill="#4c6a52" stroke="#c08a70" stroke-opacity=".8"/>
<rect x="954.500" y="469.500" width="4" height="3" fill="#684a3e" stroke="#c08a70" stroke-opacity=".8"/>
<rect x="949.500" y="416.500" width="4" height="4" fill="#684a3e" stroke="#c08a70" stroke-opacity=".8"/>
<rect x="961.500" y="636.500" width="4" height="4" fill="#4c6a52" stroke="#c08a70" stroke-opacity=".8"/>
<rect x="944.500" y="487.500" width="3" height="5" fill="#4c6a52" stroke="#c08a70" stroke-opacity=".8"/>
<rect x="953.500" y="440.500" width="3" height="5" fill="#684a3e" stroke="#c08a70" stroke-opacity=".8"/>
<rect x="949.500" y="422.500" width="2" height="3" fill="#684a3e" stroke="#c08a70" stroke-opacity=".8"/>
<rect x="942.500" y="470.500" width="4" height="3" fill="#4c6a52" stroke="#c08a70" stroke-opacity=".8"/>
<rect x="953.500" y="551.500" width="2" height="5" fill="#4c6a52" stroke="#c08a70" stroke-opacity=".8"/>
<rect x="963.500" y="515.500" width="4" height="3" fill="#684a3e" stroke="#c08a70" stroke-opacity=".8"/>
<rect x="973.500" y="612.500" width="3" height="3" fill="#684a3e" stroke="#c08a70" stroke-opacity=".8"/>
<rect x="971.500" y="625.500" width="3" height="5" fill="#684a3e" stroke="#c08a70" stroke-opacity=".8"/>
<rect x="957.500" y="499.500" width="3" height="4" fill="#684a3e" stroke="#c08a70" stroke-opacity=".8"/>
<rect x="955.500" y="465.500" width="4" height="4" fill="#684a3e" stroke="#c08a70" stroke-opacity=".8"/>
<rect x="971.500" y="585.500" width="4" height="5" fill="#684a3e" stroke="#c08a70" stroke-opacity=".8"/>
<rect x="969.500" y="535.500" width="3" height="3" fill="#684a3e" stroke="#c08a70" stroke-opacity=".8"/>
<rect x="947.500" y="471.500" width="3" height="5" fill="#4c6a52" stroke="#c08a70" stroke-opacity=".8"/>
<rect x="946.500" y="407.500" width="3" height="4" fill="#4c6a52" stroke="#c08a70" stroke-opacity=".8"/>
<rect x="953.500" y="533.500" width="3" height="3" fill="#4c6a52" stroke="#c08a70" stroke-opacity=".8"/>
<rect x="955.500" y="542.500" width="4" height="3" fill="#4c6a52" stroke="#c08a70" stroke-opacity=".8"/>
<rect x="962.500" y="632.500" width="4" height="5" fill="#4c6a52" stroke="#c08a70" stroke-opacity=".8"/>
<rect x="963.500" y="600.500" width="3" height="4" fill="#4c6a52" stroke="#c08a70" stroke-opacity=".8"/>
<rect x="951.500" y="505.500" width="3" height="3" fill="#4c6a52" stroke="#c08a70" stroke-opacity=".8"/>
<rect x="954.500" y="544.500" width="4" height="3" fill="#4c6a52" stroke="#c08a70" stroke-opacity=".8"/>
<rect x="957.500" y="575.500" width="3" height="3" fill="#4c6a52" stroke="#c08a70" stroke-opacity=".8"/>
<rect x="967.500" y="620.500" width="4" height="4" fill="#684a3e" stroke="#c08a70" stroke-opacity=".8"/>
<rect x="967.500" y="555.500" width="4" height="3" fill="#684a3e" stroke="#c08a70" stroke-opacity=".8"/>
<rect x="954.500" y="519.500" width="2" height="5" fill="#4c6a52" stroke="#c08a70" stroke-opacity=".8"/>
<rect x="950.500" y="447.500" width="3" height="3" fill="#684a3e" stroke="#c08a70" stroke-opacity=".8"/>
<rect x="943.500" y="412.500" width="3" height="4" fill="#4c6a52" stroke="#c08a70" stroke-opacity=".8"/>
<rect x="951.500" y="503.500" width="4" height="4" fill="#4c6a52" stroke="#c08a70" stroke-opacity=".8"/>
<rect x="961.500" y="519.500" width="3" height="4" fill="#684a3e" stroke="#c08a70" stroke-opacity=".8"/>
<rect x="961.500" y="514.500" width="4" height="4" fill="#684a3e" stroke="#c08a70" stroke-opacity=".8"/>
<rect x="954.500" y="540.500" width="2" height="5" fill="#4c6a52" stroke="#c08a70" stroke-opacity=".8"/>
<rect x="941.500" y="479.500" width="4" height="5" fill="#4c6a52" stroke="#c08a70" stroke-opacity=".8"/>
<rect x="953.500" y="490.500" width="4" height="4" fill="#684a3e" stroke="#c08a70" stroke-opacity=".8"/>
<rect x="954.500" y="543.500" width="3" height="4" fill="#4c6a52" stroke="#c08a70" stroke-opacity=".8"/>
<rect x="961.500" y="516.500" width="2" height="4" fill="#684a3e" stroke="#c08a70" stroke-opacity=".8"/>
<rect x="960.500" y="563.500" width="4" height="4" fill="#4c6a52" stroke="#c08a70" stroke-opacity=".8"/>
<rect x="957.500" y="605.500" width="2" height="4" fill="#4c6a52" stroke="#c08a70" stroke-opacity=".8"/>
<rect x="942.500" y="412.500" width="4" height="4" fill="#4c6a52" stroke="#c08a70" stroke-opacity=".8"/>
<rect x="958.500" y="638.500" width="3" height="3" fill="#4c6a52" stroke="#c08a70" stroke-opacity=".8"/>
<rect x="961.500" y="530.500" width="4" height="4" fill="#684a3e" stroke="#c08a70" stroke-opacity=".8"/>
<rect x="974.500" y="594.500" width="3" height="4" fill="#684a3e" stroke="#c08a70" stroke-opacity=".8"/>
<rect x="962.500" y="503.500" width="3" height="4" fill="#684a3e" stroke="#c08a70" stroke-opacity=".8"/>
<rect x="940.500" y="416.500" width="2" height="4" fill="#4c6a52" stroke="#c08a70" stroke-opacity=".8"/>
<rect x="963.500" y="536.500" width="4" height="4" fill="#684a3e" stroke="#c08a70" stroke-opacity=".8"/>
<rect x="947.500" y="637.500" width="2" height="3" fill="#4c6a52" stroke="#c08a70" stroke-opacity=".8"/>
<rect x="942.500" y="458.500" width="3" height="4" fill="#4c6a52" stroke="#c08a70" stroke-opacity=".8"/>
<rect x="971.500" y="574.500" width="3" height="5" fill="#684a3e" stroke="#c08a70" stroke-opacity=".8"/>
<rect x="969.500" y="536.500" width="4" height="3" fill="#684a3e" stroke="#c08a70" stroke-opacity=".8"/>
<rect x="958.500" y="619.500" width="4" height="4" fill="#4c6a52" stroke="#c08a70" stroke-opacity=".8"/>
<rect x="972.500" y="604.500" width="2" height="5" fill="#684a3e" stroke="#c08a70" stroke-opacity=".8"/>
<rect x="960.500" y="518.500" width="3" height="5" fill="#684a3e" stroke="#c08a70" stroke-opacity=".8"/>
<rect x="947.500" y="455.500" width="2" height="3" fill="#4c6a52" stroke="#c08a70" stroke-opacity=".8"/>
<rect x="951.500" y="532.500" width="3" height="3" fill="#4c6a52" stroke="#c08a70" stroke-opacity=".8"/>
<rect x="954.500" y="544.500" width="4" height="4" fill="#4c6a52" stroke="#c08a70" stroke-opacity=".8"/>
<rect x="970.500" y="544.500" width="4" height="3" fill="#684a3e" stroke="#c08a70" stroke-opacity=".8"/>
<rect x="973.500" y="562.500" width="3" height="5" fill="#684a3e" stroke="#c08a70" stroke-opacity=".8"/>
<rect x="951.500" y="499.500" width="2" height="4" fill="#4c6a52" stroke="#c08a70" stroke-opacity=".8"/>
<rect x="948.500" y="475.500" width="4" height="4" fill="#4c6a52" stroke="#c08a70" stroke-opacity=".8"/>
<rect x="953.500" y="417.500" width="3" height="4" fill="#684a3e" stroke="#c08a70" stroke-opacity=".8"/>
<rect x="953.500" y="501.500" width="3" height="3" fill="#4c6a52" stroke="#c08a70" stroke-opacity=".8"/>
<rect x="961.500" y="558.500" width="3" height="5" fill="#4c6a52" stroke="#c08a70" stroke-opacity=".8"/>
<rect x="945.500" y="458.500" width="3" height="4" fill="#4c6a52" stroke="#c08a70" stroke-opacity=".8"/>
<rect x="961.500" y="631.500" width="4" height="4" fill="#4c6a52" stroke="#c08a70" stroke-opacity=".8"/>
<rect x="960.500" y="520.500" width="2" height="4" fill="#684a3e" stroke="#c08a70" stroke-opacity=".8"/>
<rect x="960.500" y="590.500" width="3" height="4" fill="#4c6a52" stroke="#c08a70" stroke-opacity=".8"/>
<rect x="951.500" y="453.500" width="4" height="4" fill="#684a3e" stroke="#c08a70" stroke-opacity=".8"/>
<rect x="953.500" y="537.500" width="2" height="3" fill="#4c6a52" stroke="#c08a70" stroke-opacity=".8"/>
<rect x="952.500" y="537.500" width="3" height="3" fill="#4c6a52" stroke="#c08a70" stroke-opacity=".8"/>
<rect x="953.500" y="510.500" width="3" height="4" fill="#4c6a52" stroke="#c08a70" stroke-opacity=".8"/>
<rect x="961.500" y="504.500" width="4" height="4" fill="#684a3e" stroke="#c08a70" stroke-opacity=".8"/>
<rect x="953.500" y="536.500" width="4" height="3" fill="#4c6a52" stroke="#c08a70" stroke-opacity=".8"/>
<rect x="970.500" y="612.500" width="4" height="4" fill="#684a3e" stroke="#c08a70" stroke-opacity=".8"/>
<rect x="954.500" y="549.500" width="4" height="4" fill="#4c6a52" stroke="#c08a70" stroke-opacity=".8"/>
<rect x="960.500" y="620.500" width="3" height="3" fill="#4c6a52" stroke="#c08a70" stroke-opacity=".8"/>
<rect x="959.500" y="489.500" width="3" height="3" fill="#684a3e" stroke="#c08a70" stroke-opacity=".8"/>
<rect x="941.500" y="408.500" width="4" height="5" fill="#4c6a52" stroke="#c08a70" stroke-opacity=".8"/>
<rect x="967.500" y="635.500" width="4" height="3" fill="#684a3e" stroke="#c08a70" stroke-opacity=".8"/>
<rect x="949.500" y="440.500" width="4" height="4" fill="#684a3e" stroke="#c08a70" stroke-opacity=".8"/>
<rect x="971.500" y="554.500" width="2" height="5" fill="#684a3e" stroke="#c08a70" stroke-opacity=".8"/>
<rect x="942.500" y="475.500" width="4" height="5" fill="#4c6a52" stroke="#c08a70" stroke-opacity=".8"/>
<rect x="944.500" y="466.500" width="4" height="4" fill="#4c6a52" stroke="#c08a70" stroke-opacity=".8"/>
<rect x="967.500" y="544.500" width="3" height="4" fill="#684a3e" stroke="#c08a70" stroke-opacity=".8"/>
<rect x="954.500" y="554.500" width="3" height="4" fill="#4c6a52" stroke="#c08a70" stroke-opacity=".8"/>
<rect x="961.500" y="608.500" width="3" height="3" fill="#4c6a52" stroke="#c08a70" stroke-opacity=".8"/>
<rect x="970.500" y="603.500" width="4" height="3" fill="#684a3e" stroke="#c08a70" stroke-opacity=".8"/>
<rect x="946.500" y="409.500" width="4" height="4" fill="#4c6a52" stroke="#c08a70" stroke-opacity=".8"/>
<rect x="941.500" y="416.500" width="3" height="3" fill="#4c6a52" stroke="#c08a70" stroke-opacity=".8"/>
<rect x="970.500" y="625.500" width="3" height="3" fill="#684a3e" stroke="#c08a70" stroke-opacity=".8"/>
<rect x="961.500" y="566.500" width="2" height="5" fill="#4c6a52" stroke="#c08a70" stroke-opacity=".8"/>
<polygon points="695.0,508.3 713.3,508.3 719.7,515.6 730.7,522.9 732.1,525.7 726.3,531.5 725.4,544.8 730.2,550.5 724.4,554.4 707.3,552.4 705.3,562.9 693.9,551.5 682.4,545.8 675.8,537.2 673.9,527.6 678.6,520.0 679.4,517.4" fill="#5d879c" stroke="#72c2e6" stroke-width="1" stroke-linejoin="round" />
<text x="574" y="659" class="serif" style="font-size:15.200px" fill="#fff">B: 7: t1_fl3d_nonfs_tra_dyn</text>
</svg>
<svg class="a" style="left:1006px;top:401px" width="432" height="279" viewBox="1006 401 432 279" shape-rendering="crispEdges">
<rect x="1015.500" y="404.500" width="415" height="240" fill="#958662" stroke="#f6dc8e" stroke-width="1"/>
<g fill="none" stroke="#b9a77c" stroke-linecap="round" opacity=".7" shape-rendering="auto"><path d="M1218 406c6 10 8 20 6 30" stroke-width="2.500"/><path d="M1232 406c-2 10 2 18 8 26" stroke-width="2"/><path d="M1100 430c-6 14-8 24-8 36" stroke-width="2" opacity=".6"/><path d="M1300 415c12 8 22 18 30 30" stroke-width="2" opacity=".5"/></g>
<polygon points="1431.0,500.0 1414.9,500.0 1409.0,525.0 1405.4,520.0 1407.3,548.6 1404.4,577.3 1403.4,605.9 1402.5,645.0 1431.0,645.0" fill="#111111" />
<polygon points="1015.0,520.0 1018.6,520.0 1021.5,558.2 1022.4,586.8 1027.2,615.5 1032.9,645.0 1015.0,645.0" fill="#111111" />
<polygon points="1016.0,446.8 1039.4,446.8 1039.4,456.9 1028.4,469.8 1019.2,482.6 1016.0,482.6" fill="#86a08a" stroke="#f6dc8e" stroke-width="1" stroke-linejoin="round" />
<polygon points="1066.0,453.2 1068.7,453.2 1068.7,477.1 1072.4,491.8 1072.4,510.2 1071.1,520.0 1061.6,531.5 1053.9,554.4 1048.2,577.3 1044.4,605.9 1046.3,630.7 1052.0,645.0 1032.9,645.0 1027.2,615.5 1022.4,586.8 1021.5,558.2 1018.6,520.0 1024.7,513.8 1024.7,505.6 1032.0,501.9 1043.0,504.6 1065.1,506.5 1068.0,492.0 1065.5,477.0" fill="#86a08a" stroke="#f6dc8e" stroke-width="1" stroke-linejoin="round" />
<polygon points="1109.0,447.7 1116.5,444.1 1127.5,439.5 1138.5,439.5 1147.7,442.2 1149.5,418.4 1156.9,418.4 1155.0,436.7 1158.7,444.1 1169.4,449.4 1185.5,465.5 1195.2,475.2 1214.6,472.0 1208.2,452.6 1240.5,449.4 1243.7,472.0 1234.0,484.9 1217.9,491.4 1221.1,510.8 1227.5,520.5 1214.6,517.2 1204.9,526.9 1198.5,543.1 1214.6,543.1 1221.1,562.5 1237.2,549.5 1253.4,565.7 1256.6,585.1 1279.2,591.5 1282.5,610.9 1272.8,623.9 1259.9,610.9 1250.2,623.9 1256.6,644.5 1215.0,644.5 1215.0,604.0 1192.0,604.0 1189.5,644.5 1180.0,644.5 1176.1,626.9 1185.7,611.7 1181.9,604.0 1172.3,594.5 1158.9,587.8 1143.7,583.0 1124.6,586.8 1113.1,583.0 1105.5,590.6 1092.1,602.1 1078.7,611.7 1071.1,621.2 1069.2,644.5 1055.8,644.5 1057.7,634.6 1063.5,626.9 1063.5,609.7 1065.4,592.6 1069.2,567.7 1074.9,539.1 1084.5,520.0 1087.1,510.2 1088.9,497.3 1098.1,484.5 1105.5,469.8 1110.1,455.1" fill="#684a3e" stroke="#f6dc8e" stroke-width="1" stroke-linejoin="round" />
<polygon points="1156.9,423.0 1172.5,427.5 1171.5,433.0 1158.7,432.0" fill="#684a3e" stroke="#f6dc8e" stroke-width="1" stroke-linejoin="round" />
<polygon points="1188.8,565.7 1195.0,560.0 1208.0,566.0 1211.4,580.0 1204.0,586.0 1194.0,582.0" fill="#958662" stroke="#f6dc8e" stroke-width="1" stroke-linejoin="round" />
<polygon points="1189.5,567.7 1202.9,563.9 1210.5,577.3 1206.7,600.2 1199.0,604.0 1193.3,590.0" fill="#958662" stroke="#f6dc8e" stroke-width="1" stroke-linejoin="round" />
<polygon points="1155.1,604.0 1161.0,600.0 1164.7,610.0 1162.0,619.3 1156.0,616.0" fill="#684a3e" stroke="#f6dc8e" stroke-width="1" stroke-linejoin="round" />
<polygon points="1100.0,610.0 1104.0,600.0 1109.0,608.0 1106.0,622.0 1101.0,620.0" fill="#684a3e" stroke="#f6dc8e" stroke-width="1" stroke-linejoin="round" />
<polygon points="1126.0,600.0 1130.0,592.0 1134.0,604.0 1131.0,612.0" fill="#684a3e" stroke="#f6dc8e" stroke-width="1" stroke-linejoin="round" />
<polygon points="1143.0,596.0 1147.0,590.0 1150.0,602.0 1146.0,612.0" fill="#684a3e" stroke="#f6dc8e" stroke-width="1" stroke-linejoin="round" />
<polygon points="1259.9,462.3 1268.9,453.2 1281.7,443.1 1288.9,439.7 1298.6,442.9 1305.6,448.7 1324.5,459.1 1329.5,469.8 1336.8,486.3 1343.9,494.6 1353.6,526.9 1360.0,559.2 1360.5,596.4 1361.6,610.9 1375.0,612.0 1381.5,605.9 1385.3,626.9 1387.2,644.5 1350.0,644.5 1345.0,625.0 1337.0,610.0 1336.0,575.0 1327.7,549.5 1314.8,530.2 1298.6,517.2 1279.2,497.9 1263.1,488.2" fill="#684a3e" stroke="#f6dc8e" stroke-width="1" stroke-linejoin="round" />
<polygon points="1256.0,588.0 1292.0,588.0 1300.0,644.5 1254.0,644.5" fill="#684a3e" />
<polygon points="1296.0,560.0 1304.0,548.0 1312.0,556.0 1318.0,575.0 1312.0,592.0 1302.0,586.0" fill="#684a3e" stroke="#f6dc8e" stroke-width="1" stroke-linejoin="round" />
<polygon points="1318.0,600.0 1330.0,596.0 1336.0,612.0 1338.0,634.0 1326.0,644.5 1316.0,630.0" fill="#684a3e" stroke="#f6dc8e" stroke-width="1" stroke-linejoin="round" />
<polygon points="1298.0,606.0 1308.0,600.0 1312.0,618.0 1306.0,634.0 1298.0,626.0" fill="#684a3e" stroke="#f6dc8e" stroke-width="1" stroke-linejoin="round" />
<polygon points="1322.0,560.0 1328.0,556.0 1332.0,574.0 1326.0,584.0" fill="#684a3e" stroke="#f6dc8e" stroke-width="1" stroke-linejoin="round" />
<polygon points="1212.0,458.0 1222.0,452.0 1228.0,460.0 1224.0,470.0 1214.0,468.0" fill="#684a3e" stroke="#f6dc8e" stroke-width="1" stroke-linejoin="round" />
<polygon points="1259.0,470.0 1264.0,462.0 1268.0,476.0 1262.0,486.0" fill="#684a3e" stroke="#f6dc8e" stroke-width="1" stroke-linejoin="round" />
<polygon points="1214.0,621.0 1236.0,620.0 1238.0,630.0 1216.0,631.0" fill="#5f9a84" stroke="#f6dc8e" stroke-width="1" stroke-linejoin="round" />
<rect x="1131.500" y="592.500" width="4" height="3" fill="#684a3e" stroke="#f6dc8e" stroke-opacity=".8"/>
<rect x="1322.500" y="467.500" width="3" height="6" fill="#958662" stroke="#f6dc8e" stroke-opacity=".8"/>
<rect x="1220.500" y="457.500" width="2" height="4" fill="#958662" stroke="#f6dc8e" stroke-opacity=".8"/>
<rect x="1317.500" y="462.500" width="5" height="5" fill="#958662" stroke="#f6dc8e" stroke-opacity=".8"/>
<rect x="1225.500" y="486.500" width="4" height="4" fill="#958662" stroke="#f6dc8e" stroke-opacity=".8"/>
<rect x="1170.500" y="585.500" width="3" height="3" fill="#958662" stroke="#f6dc8e" stroke-opacity=".8"/>
<rect x="1329.500" y="588.500" width="3" height="3" fill="#684a3e" stroke="#f6dc8e" stroke-opacity=".8"/>
<rect x="1194.500" y="636.500" width="5" height="5" fill="#684a3e" stroke="#f6dc8e" stroke-opacity=".8"/>
<rect x="1227.500" y="564.500" width="3" height="3" fill="#958662" stroke="#f6dc8e" stroke-opacity=".8"/>
<rect x="1190.500" y="609.500" width="5" height="3" fill="#958662" stroke="#f6dc8e" stroke-opacity=".8"/>
<rect x="1218.500" y="471.500" width="5" height="5" fill="#958662" stroke="#f6dc8e" stroke-opacity=".8"/>
<rect x="1374.500" y="616.500" width="3" height="3" fill="#958662" stroke="#f6dc8e" stroke-opacity=".8"/>
<rect x="1201.500" y="545.500" width="4" height="4" fill="#958662" stroke="#f6dc8e" stroke-opacity=".8"/>
<rect x="1285.500" y="583.500" width="3" height="3" fill="#684a3e" stroke="#f6dc8e" stroke-opacity=".8"/>
<rect x="1260.500" y="581.500" width="3" height="4" fill="#684a3e" stroke="#f6dc8e" stroke-opacity=".8"/>
<rect x="1112.500" y="577.500" width="3" height="5" fill="#958662" stroke="#f6dc8e" stroke-opacity=".8"/>
<rect x="1310.500" y="457.500" width="4" height="4" fill="#958662" stroke="#f6dc8e" stroke-opacity=".8"/>
<rect x="1192.500" y="465.500" width="2" height="6" fill="#684a3e" stroke="#f6dc8e" stroke-opacity=".8"/>
<rect x="1203.500" y="470.500" width="5" height="5" fill="#684a3e" stroke="#f6dc8e" stroke-opacity=".8"/>
<rect x="1330.500" y="576.500" width="4" height="3" fill="#684a3e" stroke="#f6dc8e" stroke-opacity=".8"/>
<rect x="1260.500" y="598.500" width="3" height="3" fill="#958662" stroke="#f6dc8e" stroke-opacity=".8"/>
<rect x="1219.500" y="526.500" width="3" height="5" fill="#684a3e" stroke="#f6dc8e" stroke-opacity=".8"/>
<rect x="1295.500" y="618.500" width="3" height="4" fill="#958662" stroke="#f6dc8e" stroke-opacity=".8"/>
<rect x="1296.500" y="435.500" width="3" height="3" fill="#684a3e" stroke="#f6dc8e" stroke-opacity=".8"/>
<rect x="1384.500" y="636.500" width="3" height="6" fill="#958662" stroke="#f6dc8e" stroke-opacity=".8"/>
<rect x="1122.500" y="433.500" width="2" height="4" fill="#684a3e" stroke="#f6dc8e" stroke-opacity=".8"/>
<rect x="1379.500" y="616.500" width="4" height="3" fill="#958662" stroke="#f6dc8e" stroke-opacity=".8"/>
<rect x="1296.500" y="450.500" width="4" height="4" fill="#958662" stroke="#f6dc8e" stroke-opacity=".8"/>
<rect x="1268.500" y="610.500" width="3" height="3" fill="#958662" stroke="#f6dc8e" stroke-opacity=".8"/>
<rect x="1208.500" y="636.500" width="4" height="3" fill="#684a3e" stroke="#f6dc8e" stroke-opacity=".8"/>
<rect x="1210.500" y="614.500" width="3" height="3" fill="#684a3e" stroke="#f6dc8e" stroke-opacity=".8"/>
<rect x="1193.500" y="538.500" width="3" height="5" fill="#958662" stroke="#f6dc8e" stroke-opacity=".8"/>
<rect x="1087.500" y="616.500" width="5" height="6" fill="#684a3e" stroke="#f6dc8e" stroke-opacity=".8"/>
<rect x="1112.500" y="438.500" width="3" height="5" fill="#684a3e" stroke="#f6dc8e" stroke-opacity=".8"/>
<rect x="1218.500" y="608.500" width="4" height="3" fill="#958662" stroke="#f6dc8e" stroke-opacity=".8"/>
<rect x="1132.500" y="588.500" width="4" height="5" fill="#684a3e" stroke="#f6dc8e" stroke-opacity=".8"/>
<rect x="1307.500" y="456.500" width="4" height="5" fill="#958662" stroke="#f6dc8e" stroke-opacity=".8"/>
<rect x="1200.500" y="544.500" width="2" height="6" fill="#958662" stroke="#f6dc8e" stroke-opacity=".8"/>
<rect x="1182.500" y="636.500" width="3" height="3" fill="#958662" stroke="#f6dc8e" stroke-opacity=".8"/>
<rect x="1223.500" y="458.500" width="3" height="4" fill="#958662" stroke="#f6dc8e" stroke-opacity=".8"/>
<rect x="1128.500" y="591.500" width="3" height="5" fill="#684a3e" stroke="#f6dc8e" stroke-opacity=".8"/>
<rect x="1220.500" y="609.500" width="4" height="4" fill="#958662" stroke="#f6dc8e" stroke-opacity=".8"/>
<rect x="1145.500" y="438.500" width="5" height="4" fill="#684a3e" stroke="#f6dc8e" stroke-opacity=".8"/>
<rect x="1302.500" y="517.500" width="2" height="3" fill="#958662" stroke="#f6dc8e" stroke-opacity=".8"/>
<rect x="1256.500" y="489.500" width="2" height="6" fill="#684a3e" stroke="#f6dc8e" stroke-opacity=".8"/>
<rect x="1274.500" y="497.500" width="3" height="3" fill="#684a3e" stroke="#f6dc8e" stroke-opacity=".8"/>
<rect x="1229.500" y="637.500" width="3" height="5" fill="#958662" stroke="#f6dc8e" stroke-opacity=".8"/>
<rect x="1356.500" y="603.500" width="4" height="5" fill="#958662" stroke="#f6dc8e" stroke-opacity=".8"/>
<rect x="1317.500" y="464.500" width="4" height="3" fill="#958662" stroke="#f6dc8e" stroke-opacity=".8"/>
<rect x="1290.500" y="596.500" width="4" height="4" fill="#958662" stroke="#f6dc8e" stroke-opacity=".8"/>
<rect x="1287.500" y="612.500" width="4" height="3" fill="#958662" stroke="#f6dc8e" stroke-opacity=".8"/>
<rect x="1222.500" y="474.500" width="3" height="3" fill="#958662" stroke="#f6dc8e" stroke-opacity=".8"/>
<rect x="1177.500" y="604.500" width="3" height="4" fill="#684a3e" stroke="#f6dc8e" stroke-opacity=".8"/>
<rect x="1291.500" y="615.500" width="3" height="6" fill="#958662" stroke="#f6dc8e" stroke-opacity=".8"/>
<rect x="1331.500" y="590.500" width="5" height="4" fill="#684a3e" stroke="#f6dc8e" stroke-opacity=".8"/>
<rect x="1136.500" y="442.500" width="2" height="3" fill="#958662" stroke="#f6dc8e" stroke-opacity=".8"/>
<rect x="1228.500" y="481.500" width="4" height="6" fill="#958662" stroke="#f6dc8e" stroke-opacity=".8"/>
<rect x="1152.500" y="416.500" width="4" height="4" fill="#684a3e" stroke="#f6dc8e" stroke-opacity=".8"/>
<rect x="1213.500" y="617.500" width="5" height="4" fill="#684a3e" stroke="#f6dc8e" stroke-opacity=".8"/>
<rect x="1174.500" y="624.500" width="3" height="3" fill="#684a3e" stroke="#f6dc8e" stroke-opacity=".8"/>
<rect x="1152.500" y="590.500" width="2" height="4" fill="#684a3e" stroke="#f6dc8e" stroke-opacity=".8"/>
<rect x="1137.500" y="444.500" width="3" height="5" fill="#958662" stroke="#f6dc8e" stroke-opacity=".8"/>
<rect x="1314.500" y="457.500" width="2" height="5" fill="#958662" stroke="#f6dc8e" stroke-opacity=".8"/>
<rect x="1378.500" y="620.500" width="4" height="6" fill="#958662" stroke="#f6dc8e" stroke-opacity=".8"/>
<rect x="1289.500" y="590.500" width="3" height="6" fill="#958662" stroke="#f6dc8e" stroke-opacity=".8"/>
<rect x="1221.500" y="618.500" width="3" height="5" fill="#958662" stroke="#f6dc8e" stroke-opacity=".8"/>
<rect x="1385.500" y="608.500" width="4" height="4" fill="#684a3e" stroke="#f6dc8e" stroke-opacity=".8"/>
<rect x="1307.500" y="457.500" width="3" height="6" fill="#958662" stroke="#f6dc8e" stroke-opacity=".8"/>
<rect x="1083.500" y="618.500" width="3" height="4" fill="#684a3e" stroke="#f6dc8e" stroke-opacity=".8"/>
<rect x="1272.500" y="613.500" width="4" height="4" fill="#958662" stroke="#f6dc8e" stroke-opacity=".8"/>
<rect x="1356.500" y="609.500" width="3" height="6" fill="#958662" stroke="#f6dc8e" stroke-opacity=".8"/>
<rect x="1257.500" y="475.500" width="4" height="4" fill="#684a3e" stroke="#f6dc8e" stroke-opacity=".8"/>
<rect x="1314.500" y="528.500" width="5" height="3" fill="#958662" stroke="#f6dc8e" stroke-opacity=".8"/>
<rect x="1389.500" y="604.500" width="4" height="4" fill="#684a3e" stroke="#f6dc8e" stroke-opacity=".8"/>
<rect x="1264.500" y="455.500" width="3" height="3" fill="#684a3e" stroke="#f6dc8e" stroke-opacity=".8"/>
<rect x="1295.500" y="631.500" width="4" height="3" fill="#958662" stroke="#f6dc8e" stroke-opacity=".8"/>
<rect x="1146.500" y="576.500" width="5" height="4" fill="#958662" stroke="#f6dc8e" stroke-opacity=".8"/>
<rect x="1222.500" y="546.500" width="3" height="3" fill="#684a3e" stroke="#f6dc8e" stroke-opacity=".8"/>
<rect x="1276.500" y="617.500" width="3" height="5" fill="#958662" stroke="#f6dc8e" stroke-opacity=".8"/>
<rect x="1193.500" y="630.500" width="3" height="3" fill="#684a3e" stroke="#f6dc8e" stroke-opacity=".8"/>
<rect x="1230.500" y="455.500" width="2" height="4" fill="#958662" stroke="#f6dc8e" stroke-opacity=".8"/>
<rect x="1218.500" y="478.500" width="4" height="3" fill="#958662" stroke="#f6dc8e" stroke-opacity=".8"/>
<rect x="1216.500" y="476.500" width="4" height="4" fill="#958662" stroke="#f6dc8e" stroke-opacity=".8"/>
<rect x="1303.500" y="512.500" width="3" height="3" fill="#958662" stroke="#f6dc8e" stroke-opacity=".8"/>
<rect x="1323.500" y="466.500" width="3" height="3" fill="#958662" stroke="#f6dc8e" stroke-opacity=".8"/>
<rect x="1116.500" y="578.500" width="2" height="4" fill="#958662" stroke="#f6dc8e" stroke-opacity=".8"/>
<rect x="1335.500" y="470.500" width="4" height="4" fill="#684a3e" stroke="#f6dc8e" stroke-opacity=".8"/>
<rect x="1220.500" y="627.500" width="4" height="4" fill="#958662" stroke="#f6dc8e" stroke-opacity=".8"/>
<rect x="1165.500" y="456.500" width="2" height="3" fill="#958662" stroke="#f6dc8e" stroke-opacity=".8"/>
<rect x="1377.500" y="615.500" width="4" height="3" fill="#958662" stroke="#f6dc8e" stroke-opacity=".8"/>
<rect x="1217.500" y="618.500" width="2" height="4" fill="#958662" stroke="#f6dc8e" stroke-opacity=".8"/>
<rect x="1182.500" y="609.500" width="4" height="3" fill="#684a3e" stroke="#f6dc8e" stroke-opacity=".8"/>
<rect x="1257.500" y="491.500" width="4" height="3" fill="#684a3e" stroke="#f6dc8e" stroke-opacity=".8"/>
<rect x="1223.500" y="509.500" width="4" height="3" fill="#684a3e" stroke="#f6dc8e" stroke-opacity=".8"/>
<rect x="1219.500" y="626.500" width="4" height="4" fill="#958662" stroke="#f6dc8e" stroke-opacity=".8"/>
<rect x="1331.500" y="457.500" width="3" height="4" fill="#684a3e" stroke="#f6dc8e" stroke-opacity=".8"/>
<rect x="1212.500" y="556.500" width="4" height="3" fill="#958662" stroke="#f6dc8e" stroke-opacity=".8"/>
<rect x="1384.500" y="607.500" width="3" height="6" fill="#684a3e" stroke="#f6dc8e" stroke-opacity=".8"/>
<rect x="1331.500" y="465.500" width="5" height="5" fill="#684a3e" stroke="#f6dc8e" stroke-opacity=".8"/>
<rect x="1247.500" y="480.500" width="4" height="4" fill="#684a3e" stroke="#f6dc8e" stroke-opacity=".8"/>
<rect x="1283.500" y="593.500" width="4" height="6" fill="#958662" stroke="#f6dc8e" stroke-opacity=".8"/>
<rect x="1289.500" y="621.500" width="2" height="5" fill="#958662" stroke="#f6dc8e" stroke-opacity=".8"/>
<rect x="1285.500" y="450.500" width="3" height="3" fill="#958662" stroke="#f6dc8e" stroke-opacity=".8"/>
<rect x="1206.500" y="542.500" width="5" height="4" fill="#684a3e" stroke="#f6dc8e" stroke-opacity=".8"/>
<rect x="1219.500" y="511.500" width="4" height="3" fill="#958662" stroke="#f6dc8e" stroke-opacity=".8"/>
<rect x="1230.500" y="481.500" width="4" height="4" fill="#958662" stroke="#f6dc8e" stroke-opacity=".8"/>
<rect x="1255.500" y="586.500" width="4" height="4" fill="#958662" stroke="#f6dc8e" stroke-opacity=".8"/>
<rect x="1219.500" y="569.500" width="2" height="4" fill="#958662" stroke="#f6dc8e" stroke-opacity=".8"/>
<rect x="1273.500" y="594.500" width="3" height="4" fill="#958662" stroke="#f6dc8e" stroke-opacity=".8"/>
<rect x="1090.500" y="607.500" width="3" height="3" fill="#684a3e" stroke="#f6dc8e" stroke-opacity=".8"/>
<rect x="1203.500" y="608.500" width="5" height="6" fill="#684a3e" stroke="#f6dc8e" stroke-opacity=".8"/>
<rect x="1277.500" y="596.500" width="3" height="3" fill="#958662" stroke="#f6dc8e" stroke-opacity=".8"/>
<rect x="1176.500" y="459.500" width="5" height="3" fill="#958662" stroke="#f6dc8e" stroke-opacity=".8"/>
<rect x="1246.500" y="447.500" width="3" height="3" fill="#684a3e" stroke="#f6dc8e" stroke-opacity=".8"/>
<rect x="1203.500" y="479.500" width="3" height="6" fill="#958662" stroke="#f6dc8e" stroke-opacity=".8"/>
<rect x="1276.500" y="610.500" width="3" height="3" fill="#958662" stroke="#f6dc8e" stroke-opacity=".8"/>
<rect x="1092.500" y="597.500" width="4" height="5" fill="#958662" stroke="#f6dc8e" stroke-opacity=".8"/>
<rect x="1262.500" y="622.500" width="2" height="3" fill="#958662" stroke="#f6dc8e" stroke-opacity=".8"/>
<rect x="1125.500" y="593.500" width="3" height="3" fill="#684a3e" stroke="#f6dc8e" stroke-opacity=".8"/>
<rect x="1141.500" y="448.500" width="3" height="4" fill="#958662" stroke="#f6dc8e" stroke-opacity=".8"/>
<rect x="1325.500" y="456.500" width="4" height="5" fill="#684a3e" stroke="#f6dc8e" stroke-opacity=".8"/>
<rect x="1196.500" y="599.500" width="4" height="3" fill="#958662" stroke="#f6dc8e" stroke-opacity=".8"/>
<rect x="1313.500" y="455.500" width="3" height="3" fill="#958662" stroke="#f6dc8e" stroke-opacity=".8"/>
<rect x="1289.500" y="519.500" width="2" height="5" fill="#684a3e" stroke="#f6dc8e" stroke-opacity=".8"/>
<rect x="1230.500" y="519.500" width="3" height="4" fill="#684a3e" stroke="#f6dc8e" stroke-opacity=".8"/>
<rect x="1133.500" y="434.500" width="5" height="3" fill="#684a3e" stroke="#f6dc8e" stroke-opacity=".8"/>
<rect x="1189.500" y="625.500" width="3" height="4" fill="#958662" stroke="#f6dc8e" stroke-opacity=".8"/>
<rect x="1229.500" y="509.500" width="3" height="3" fill="#684a3e" stroke="#f6dc8e" stroke-opacity=".8"/>
<rect x="1266.500" y="467.500" width="4" height="3" fill="#958662" stroke="#f6dc8e" stroke-opacity=".8"/>
<rect x="1381.500" y="631.500" width="4" height="3" fill="#958662" stroke="#f6dc8e" stroke-opacity=".8"/>
<rect x="1232.500" y="481.500" width="5" height="6" fill="#958662" stroke="#f6dc8e" stroke-opacity=".8"/>
<rect x="1325.500" y="478.500" width="5" height="5" fill="#958662" stroke="#f6dc8e" stroke-opacity=".8"/>
<rect x="1216.500" y="540.500" width="5" height="6" fill="#684a3e" stroke="#f6dc8e" stroke-opacity=".8"/>
<rect x="1343.500" y="629.500" width="4" height="4" fill="#684a3e" stroke="#f6dc8e" stroke-opacity=".8"/>
<rect x="1365.500" y="615.500" width="5" height="4" fill="#958662" stroke="#f6dc8e" stroke-opacity=".8"/>
<rect x="1333.500" y="483.500" width="4" height="4" fill="#958662" stroke="#f6dc8e" stroke-opacity=".8"/>
<rect x="1188.500" y="614.500" width="5" height="4" fill="#958662" stroke="#f6dc8e" stroke-opacity=".8"/>
<rect x="1223.500" y="498.500" width="4" height="3" fill="#684a3e" stroke="#f6dc8e" stroke-opacity=".8"/>
<rect x="1266.500" y="492.500" width="4" height="5" fill="#684a3e" stroke="#f6dc8e" stroke-opacity=".8"/>
<rect x="1333.500" y="492.500" width="3" height="3" fill="#958662" stroke="#f6dc8e" stroke-opacity=".8"/>
<rect x="1154.500" y="581.500" width="4" height="3" fill="#958662" stroke="#f6dc8e" stroke-opacity=".8"/>
<rect x="1331.500" y="460.500" width="4" height="5" fill="#684a3e" stroke="#f6dc8e" stroke-opacity=".8"/>
<rect x="1313.500" y="449.500" width="4" height="3" fill="#684a3e" stroke="#f6dc8e" stroke-opacity=".8"/>
<rect x="1178.500" y="619.500" width="3" height="6" fill="#684a3e" stroke="#f6dc8e" stroke-opacity=".8"/>
<rect x="1197.500" y="634.500" width="2" height="3" fill="#684a3e" stroke="#f6dc8e" stroke-opacity=".8"/>
<rect x="1133.500" y="435.500" width="4" height="4" fill="#684a3e" stroke="#f6dc8e" stroke-opacity=".8"/>
<rect x="1243.500" y="626.500" width="3" height="4" fill="#958662" stroke="#f6dc8e" stroke-opacity=".8"/>
<rect x="1377.500" y="625.500" width="2" height="3" fill="#958662" stroke="#f6dc8e" stroke-opacity=".8"/>
<rect x="1183.500" y="603.500" width="3" height="3" fill="#958662" stroke="#f6dc8e" stroke-opacity=".8"/>
<rect x="1297.500" y="637.500" width="3" height="4" fill="#958662" stroke="#f6dc8e" stroke-opacity=".8"/>
<rect x="1207.500" y="454.500" width="5" height="3" fill="#684a3e" stroke="#f6dc8e" stroke-opacity=".8"/>
<rect x="1194.500" y="602.500" width="3" height="5" fill="#958662" stroke="#f6dc8e" stroke-opacity=".8"/>
<rect x="1330.500" y="458.500" width="3" height="3" fill="#684a3e" stroke="#f6dc8e" stroke-opacity=".8"/>
<rect x="1219.500" y="636.500" width="5" height="3" fill="#958662" stroke="#f6dc8e" stroke-opacity=".8"/>
<rect x="1136.500" y="581.500" width="5" height="3" fill="#958662" stroke="#f6dc8e" stroke-opacity=".8"/>
<rect x="1338.500" y="471.500" width="3" height="4" fill="#684a3e" stroke="#f6dc8e" stroke-opacity=".8"/>
<rect x="1084.500" y="615.500" width="2" height="5" fill="#684a3e" stroke="#f6dc8e" stroke-opacity=".8"/>
<rect x="1143.500" y="577.500" width="4" height="4" fill="#958662" stroke="#f6dc8e" stroke-opacity=".8"/>
<rect x="1377.500" y="637.500" width="3" height="3" fill="#958662" stroke="#f6dc8e" stroke-opacity=".8"/>
<rect x="1292.500" y="627.500" width="5" height="3" fill="#958662" stroke="#f6dc8e" stroke-opacity=".8"/>
<rect x="1249.500" y="620.500" width="2" height="6" fill="#958662" stroke="#f6dc8e" stroke-opacity=".8"/>
<rect x="1211.500" y="602.500" width="4" height="6" fill="#958662" stroke="#f6dc8e" stroke-opacity=".8"/>
<rect x="1192.500" y="546.500" width="3" height="3" fill="#958662" stroke="#f6dc8e" stroke-opacity=".8"/>
<rect x="1180.500" y="616.500" width="3" height="3" fill="#684a3e" stroke="#f6dc8e" stroke-opacity=".8"/>
<rect x="1230.500" y="551.500" width="4" height="6" fill="#684a3e" stroke="#f6dc8e" stroke-opacity=".8"/>
<rect x="1165.500" y="597.500" width="3" height="5" fill="#684a3e" stroke="#f6dc8e" stroke-opacity=".8"/>
<rect x="1254.500" y="475.500" width="3" height="5" fill="#684a3e" stroke="#f6dc8e" stroke-opacity=".8"/>
<rect x="1296.500" y="584.500" width="2" height="3" fill="#684a3e" stroke="#f6dc8e" stroke-opacity=".8"/>
<rect x="1249.500" y="609.500" width="3" height="5" fill="#958662" stroke="#f6dc8e" stroke-opacity=".8"/>
<rect x="1251.500" y="575.500" width="5" height="4" fill="#958662" stroke="#f6dc8e" stroke-opacity=".8"/>
<rect x="1189.500" y="600.500" width="4" height="6" fill="#958662" stroke="#f6dc8e" stroke-opacity=".8"/>
<rect x="1288.500" y="580.500" width="2" height="4" fill="#684a3e" stroke="#f6dc8e" stroke-opacity=".8"/>
<rect x="1228.500" y="516.500" width="2" height="6" fill="#684a3e" stroke="#f6dc8e" stroke-opacity=".8"/>
<rect x="1233.500" y="560.500" width="2" height="4" fill="#958662" stroke="#f6dc8e" stroke-opacity=".8"/>
<rect x="1150.500" y="431.500" width="4" height="4" fill="#958662" stroke="#f6dc8e" stroke-opacity=".8"/>
<rect x="1330.500" y="607.500" width="5" height="3" fill="#684a3e" stroke="#f6dc8e" stroke-opacity=".8"/>
<rect x="1237.500" y="548.500" width="3" height="3" fill="#684a3e" stroke="#f6dc8e" stroke-opacity=".8"/>
<rect x="1153.500" y="583.500" width="3" height="4" fill="#958662" stroke="#f6dc8e" stroke-opacity=".8"/>
<rect x="1336.500" y="570.500" width="3" height="5" fill="#958662" stroke="#f6dc8e" stroke-opacity=".8"/>
<rect x="1095.500" y="607.500" width="4" height="4" fill="#684a3e" stroke="#f6dc8e" stroke-opacity=".8"/>
<rect x="1246.500" y="473.500" width="4" height="5" fill="#684a3e" stroke="#f6dc8e" stroke-opacity=".8"/>
<rect x="1236.500" y="542.500" width="5" height="3" fill="#684a3e" stroke="#f6dc8e" stroke-opacity=".8"/>
<rect x="1384.500" y="627.500" width="4" height="6" fill="#958662" stroke="#f6dc8e" stroke-opacity=".8"/>
<rect x="1290.500" y="612.500" width="3" height="4" fill="#958662" stroke="#f6dc8e" stroke-opacity=".8"/>
<rect x="1352.500" y="637.500" width="3" height="6" fill="#958662" stroke="#f6dc8e" stroke-opacity=".8"/>
<rect x="1245.500" y="551.500" width="4" height="4" fill="#684a3e" stroke="#f6dc8e" stroke-opacity=".8"/>
<rect x="1192.500" y="546.500" width="4" height="3" fill="#958662" stroke="#f6dc8e" stroke-opacity=".8"/>
<rect x="1258.500" y="471.500" width="2" height="4" fill="#684a3e" stroke="#f6dc8e" stroke-opacity=".8"/>
<rect x="1389.500" y="619.500" width="4" height="5" fill="#684a3e" stroke="#f6dc8e" stroke-opacity=".8"/>
<rect x="1264.500" y="479.500" width="5" height="4" fill="#958662" stroke="#f6dc8e" stroke-opacity=".8"/>
<rect x="1233.500" y="448.500" width="3" height="5" fill="#684a3e" stroke="#f6dc8e" stroke-opacity=".8"/>
<rect x="1234.500" y="453.500" width="4" height="5" fill="#958662" stroke="#f6dc8e" stroke-opacity=".8"/>
<rect x="1258.500" y="461.500" width="5" height="5" fill="#684a3e" stroke="#f6dc8e" stroke-opacity=".8"/>
<rect x="1330.500" y="587.500" width="3" height="4" fill="#684a3e" stroke="#f6dc8e" stroke-opacity=".8"/>
<rect x="1295.500" y="519.500" width="3" height="6" fill="#684a3e" stroke="#f6dc8e" stroke-opacity=".8"/>
<rect x="1333.500" y="587.500" width="4" height="3" fill="#684a3e" stroke="#f6dc8e" stroke-opacity=".8"/>
<rect x="1272.500" y="459.500" width="3" height="4" fill="#958662" stroke="#f6dc8e" stroke-opacity=".8"/>
<rect x="1302.500" y="513.500" width="4" height="5" fill="#958662" stroke="#f6dc8e" stroke-opacity=".8"/>
<rect x="1213.500" y="627.500" width="4" height="3" fill="#684a3e" stroke="#f6dc8e" stroke-opacity=".8"/>
<rect x="1219.500" y="562.500" width="4" height="5" fill="#958662" stroke="#f6dc8e" stroke-opacity=".8"/>
<rect x="1241.500" y="480.500" width="4" height="3" fill="#684a3e" stroke="#f6dc8e" stroke-opacity=".8"/>
<rect x="1148.500" y="589.500" width="5" height="4" fill="#684a3e" stroke="#f6dc8e" stroke-opacity=".8"/>
<rect x="1220.500" y="483.500" width="4" height="3" fill="#958662" stroke="#f6dc8e" stroke-opacity=".8"/>
<rect x="1302.500" y="512.500" width="4" height="5" fill="#958662" stroke="#f6dc8e" stroke-opacity=".8"/>
<rect x="1286.500" y="435.500" width="2" height="3" fill="#684a3e" stroke="#f6dc8e" stroke-opacity=".8"/>
<rect x="1084.500" y="598.500" width="4" height="5" fill="#958662" stroke="#f6dc8e" stroke-opacity=".8"/>
<rect x="1223.500" y="455.500" width="3" height="3" fill="#958662" stroke="#f6dc8e" stroke-opacity=".8"/>
<rect x="1202.500" y="609.500" width="2" height="4" fill="#684a3e" stroke="#f6dc8e" stroke-opacity=".8"/>
<rect x="1235.500" y="461.500" width="2" height="5" fill="#958662" stroke="#f6dc8e" stroke-opacity=".8"/>
<rect x="1324.500" y="532.500" width="5" height="4" fill="#958662" stroke="#f6dc8e" stroke-opacity=".8"/>
<rect x="1295.500" y="449.500" width="5" height="3" fill="#958662" stroke="#f6dc8e" stroke-opacity=".8"/>
<rect x="1321.500" y="541.500" width="4" height="3" fill="#684a3e" stroke="#f6dc8e" stroke-opacity=".8"/>
<rect x="1087.500" y="615.500" width="4" height="6" fill="#684a3e" stroke="#f6dc8e" stroke-opacity=".8"/>
<rect x="1278.500" y="502.500" width="4" height="3" fill="#684a3e" stroke="#f6dc8e" stroke-opacity=".8"/>
<rect x="1300.500" y="525.500" width="4" height="4" fill="#684a3e" stroke="#f6dc8e" stroke-opacity=".8"/>
<rect x="1276.500" y="624.500" width="2" height="4" fill="#958662" stroke="#f6dc8e" stroke-opacity=".8"/>
<rect x="1227.500" y="564.500" width="5" height="4" fill="#958662" stroke="#f6dc8e" stroke-opacity=".8"/>
<rect x="1368.500" y="602.500" width="4" height="6" fill="#684a3e" stroke="#f6dc8e" stroke-opacity=".8"/>
<rect x="1229.500" y="550.500" width="3" height="4" fill="#684a3e" stroke="#f6dc8e" stroke-opacity=".8"/>
<rect x="1130.500" y="593.500" width="4" height="3" fill="#684a3e" stroke="#f6dc8e" stroke-opacity=".8"/>
<rect x="1257.500" y="595.500" width="3" height="3" fill="#958662" stroke="#f6dc8e" stroke-opacity=".8"/>
<rect x="1234.500" y="560.500" width="4" height="5" fill="#958662" stroke="#f6dc8e" stroke-opacity=".8"/>
<rect x="1245.500" y="632.500" width="3" height="3" fill="#958662" stroke="#f6dc8e" stroke-opacity=".8"/>
<rect x="1258.500" y="577.500" width="4" height="3" fill="#684a3e" stroke="#f6dc8e" stroke-opacity=".8"/>
<rect x="1077.500" y="629.500" width="4" height="4" fill="#684a3e" stroke="#f6dc8e" stroke-opacity=".8"/>
<rect x="1256.500" y="636.500" width="4" height="3" fill="#958662" stroke="#f6dc8e" stroke-opacity=".8"/>
<rect x="1210.500" y="542.500" width="2" height="3" fill="#684a3e" stroke="#f6dc8e" stroke-opacity=".8"/>
<rect x="1333.500" y="552.500" width="4" height="5" fill="#958662" stroke="#f6dc8e" stroke-opacity=".8"/>
<rect x="1204.500" y="537.500" width="4" height="4" fill="#684a3e" stroke="#f6dc8e" stroke-opacity=".8"/>
<rect x="1282.500" y="599.500" width="3" height="4" fill="#958662" stroke="#f6dc8e" stroke-opacity=".8"/>
<rect x="1231.500" y="563.500" width="4" height="4" fill="#958662" stroke="#f6dc8e" stroke-opacity=".8"/>
<rect x="1079.500" y="619.500" width="2" height="5" fill="#684a3e" stroke="#f6dc8e" stroke-opacity=".8"/>
<rect x="1246.500" y="459.500" width="4" height="3" fill="#684a3e" stroke="#f6dc8e" stroke-opacity=".8"/>
<rect x="1281.500" y="452.500" width="4" height="5" fill="#958662" stroke="#f6dc8e" stroke-opacity=".8"/>
<rect x="1224.500" y="548.500" width="3" height="6" fill="#684a3e" stroke="#f6dc8e" stroke-opacity=".8"/>
<rect x="1319.500" y="454.500" width="3" height="4" fill="#684a3e" stroke="#f6dc8e" stroke-opacity=".8"/>
<rect x="1315.500" y="526.500" width="3" height="3" fill="#958662" stroke="#f6dc8e" stroke-opacity=".8"/>
<rect x="1277.500" y="612.500" width="4" height="6" fill="#958662" stroke="#f6dc8e" stroke-opacity=".8"/>
<rect x="1242.500" y="471.500" width="5" height="4" fill="#958662" stroke="#f6dc8e" stroke-opacity=".8"/>
<rect x="1116.500" y="451.500" width="4" height="6" fill="#958662" stroke="#f6dc8e" stroke-opacity=".8"/>
<rect x="1179.500" y="624.500" width="4" height="4" fill="#958662" stroke="#f6dc8e" stroke-opacity=".8"/>
<rect x="1249.500" y="589.500" width="4" height="5" fill="#958662" stroke="#f6dc8e" stroke-opacity=".8"/>
<rect x="1169.500" y="459.500" width="3" height="3" fill="#958662" stroke="#f6dc8e" stroke-opacity=".8"/>
<rect x="1320.500" y="463.500" width="2" height="6" fill="#958662" stroke="#f6dc8e" stroke-opacity=".8"/>
<rect x="1218.500" y="470.500" width="5" height="4" fill="#958662" stroke="#f6dc8e" stroke-opacity=".8"/>
<rect x="1142.500" y="420.500" width="2" height="4" fill="#684a3e" stroke="#f6dc8e" stroke-opacity=".8"/>
<rect x="1224.500" y="550.500" width="2" height="5" fill="#684a3e" stroke="#f6dc8e" stroke-opacity=".8"/>
<rect x="1112.500" y="591.500" width="4" height="6" fill="#684a3e" stroke="#f6dc8e" stroke-opacity=".8"/>
<rect x="1296.500" y="435.500" width="3" height="4" fill="#684a3e" stroke="#f6dc8e" stroke-opacity=".8"/>
<rect x="1127.500" y="581.500" width="4" height="3" fill="#958662" stroke="#f6dc8e" stroke-opacity=".8"/>
<rect x="1357.500" y="616.500" width="5" height="3" fill="#958662" stroke="#f6dc8e" stroke-opacity=".8"/>
<rect x="1196.500" y="622.500" width="3" height="5" fill="#684a3e" stroke="#f6dc8e" stroke-opacity=".8"/>
<rect x="1344.500" y="614.500" width="3" height="4" fill="#958662" stroke="#f6dc8e" stroke-opacity=".8"/>
<rect x="1312.500" y="535.500" width="4" height="3" fill="#684a3e" stroke="#f6dc8e" stroke-opacity=".8"/>
<rect x="1216.500" y="622.500" width="4" height="5" fill="#958662" stroke="#f6dc8e" stroke-opacity=".8"/>
<rect x="1293.500" y="523.500" width="3" height="4" fill="#684a3e" stroke="#f6dc8e" stroke-opacity=".8"/>
<rect x="1149.500" y="590.500" width="5" height="6" fill="#684a3e" stroke="#f6dc8e" stroke-opacity=".8"/>
<rect x="1169.500" y="586.500" width="4" height="3" fill="#958662" stroke="#f6dc8e" stroke-opacity=".8"/>
<rect x="1387.500" y="610.500" width="3" height="3" fill="#684a3e" stroke="#f6dc8e" stroke-opacity=".8"/>
<rect x="1179.500" y="609.500" width="4" height="3" fill="#684a3e" stroke="#f6dc8e" stroke-opacity=".8"/>
<rect x="1208.500" y="450.500" width="5" height="3" fill="#684a3e" stroke="#f6dc8e" stroke-opacity=".8"/>
<rect x="1112.500" y="472.500" width="4" height="4" fill="#958662" stroke="#f6dc8e" stroke-opacity=".8"/>
<rect x="1219.500" y="490.500" width="4" height="4" fill="#958662" stroke="#f6dc8e" stroke-opacity=".8"/>
<rect x="1250.500" y="556.500" width="2" height="6" fill="#684a3e" stroke="#f6dc8e" stroke-opacity=".8"/>
<rect x="1363.500" y="618.500" width="2" height="3" fill="#958662" stroke="#f6dc8e" stroke-opacity=".8"/>
<rect x="1287.500" y="604.500" width="5" height="3" fill="#958662" stroke="#f6dc8e" stroke-opacity=".8"/>
<rect x="1243.500" y="478.500" width="4" height="4" fill="#684a3e" stroke="#f6dc8e" stroke-opacity=".8"/>
<rect x="1228.500" y="444.500" width="2" height="4" fill="#684a3e" stroke="#f6dc8e" stroke-opacity=".8"/>
<rect x="1146.500" y="429.500" width="2" height="5" fill="#684a3e" stroke="#f6dc8e" stroke-opacity=".8"/>
<rect x="1219.500" y="601.500" width="3" height="5" fill="#958662" stroke="#f6dc8e" stroke-opacity=".8"/>
<rect x="1380.500" y="615.500" width="3" height="6" fill="#958662" stroke="#f6dc8e" stroke-opacity=".8"/>
<rect x="1337.500" y="621.500" width="3" height="3" fill="#684a3e" stroke="#f6dc8e" stroke-opacity=".8"/>
<rect x="1108.500" y="578.500" width="5" height="3" fill="#958662" stroke="#f6dc8e" stroke-opacity=".8"/>
<rect x="1214.500" y="634.500" width="4" height="5" fill="#684a3e" stroke="#f6dc8e" stroke-opacity=".8"/>
<rect x="1298.500" y="446.500" width="5" height="4" fill="#958662" stroke="#f6dc8e" stroke-opacity=".8"/>
<rect x="1253.500" y="579.500" width="3" height="3" fill="#958662" stroke="#f6dc8e" stroke-opacity=".8"/>
<rect x="1334.500" y="593.500" width="4" height="6" fill="#684a3e" stroke="#f6dc8e" stroke-opacity=".8"/>
<rect x="1138.500" y="444.500" width="2" height="3" fill="#958662" stroke="#f6dc8e" stroke-opacity=".8"/>
<rect x="1364.500" y="609.500" width="4" height="3" fill="#684a3e" stroke="#f6dc8e" stroke-opacity=".8"/>
<rect x="1145.500" y="418.500" width="3" height="3" fill="#684a3e" stroke="#f6dc8e" stroke-opacity=".8"/>
<rect x="1254.500" y="591.500" width="3" height="5" fill="#958662" stroke="#f6dc8e" stroke-opacity=".8"/>
<rect x="1274.500" y="583.500" width="2" height="5" fill="#684a3e" stroke="#f6dc8e" stroke-opacity=".8"/>
<rect x="1077.500" y="608.500" width="4" height="5" fill="#958662" stroke="#f6dc8e" stroke-opacity=".8"/>
<rect x="1182.500" y="615.500" width="2" height="5" fill="#684a3e" stroke="#f6dc8e" stroke-opacity=".8"/>
<rect x="1181.500" y="593.500" width="4" height="4" fill="#958662" stroke="#f6dc8e" stroke-opacity=".8"/>
<rect x="1232.500" y="479.500" width="3" height="6" fill="#958662" stroke="#f6dc8e" stroke-opacity=".8"/>
<rect x="1302.500" y="622.500" width="4" height="3" fill="#684a3e" stroke="#f6dc8e" stroke-opacity=".8"/>
<rect x="1132.500" y="435.500" width="5" height="6" fill="#684a3e" stroke="#f6dc8e" stroke-opacity=".8"/>
<rect x="1160.500" y="442.500" width="4" height="4" fill="#684a3e" stroke="#f6dc8e" stroke-opacity=".8"/>
<rect x="1244.500" y="550.500" width="2" height="5" fill="#684a3e" stroke="#f6dc8e" stroke-opacity=".8"/>
<rect x="1263.500" y="464.500" width="4" height="3" fill="#958662" stroke="#f6dc8e" stroke-opacity=".8"/>
<rect x="1236.500" y="457.500" width="2" height="3" fill="#958662" stroke="#f6dc8e" stroke-opacity=".8"/>
<rect x="1334.500" y="576.500" width="5" height="4" fill="#684a3e" stroke="#f6dc8e" stroke-opacity=".8"/>
<rect x="1350.500" y="624.500" width="4" height="4" fill="#958662" stroke="#f6dc8e" stroke-opacity=".8"/>
<rect x="1336.500" y="553.500" width="4" height="4" fill="#958662" stroke="#f6dc8e" stroke-opacity=".8"/>
<rect x="1289.500" y="590.500" width="4" height="3" fill="#958662" stroke="#f6dc8e" stroke-opacity=".8"/>
<rect x="1285.500" y="591.500" width="3" height="3" fill="#958662" stroke="#f6dc8e" stroke-opacity=".8"/>
<rect x="1114.500" y="441.500" width="2" height="4" fill="#684a3e" stroke="#f6dc8e" stroke-opacity=".8"/>
<rect x="1156.500" y="441.500" width="4" height="4" fill="#958662" stroke="#f6dc8e" stroke-opacity=".8"/>
<rect x="1185.500" y="607.500" width="5" height="5" fill="#958662" stroke="#f6dc8e" stroke-opacity=".8"/>
<rect x="1330.500" y="584.500" width="3" height="4" fill="#684a3e" stroke="#f6dc8e" stroke-opacity=".8"/>
<rect x="1108.500" y="592.500" width="3" height="6" fill="#684a3e" stroke="#f6dc8e" stroke-opacity=".8"/>
<rect x="1223.500" y="509.500" width="4" height="6" fill="#684a3e" stroke="#f6dc8e" stroke-opacity=".8"/>
<rect x="1177.500" y="460.500" width="5" height="3" fill="#958662" stroke="#f6dc8e" stroke-opacity=".8"/>
<rect x="1386.500" y="604.500" width="2" height="5" fill="#684a3e" stroke="#f6dc8e" stroke-opacity=".8"/>
<rect x="1298.500" y="588.500" width="3" height="3" fill="#684a3e" stroke="#f6dc8e" stroke-opacity=".8"/>
<rect x="1339.500" y="622.500" width="2" height="4" fill="#684a3e" stroke="#f6dc8e" stroke-opacity=".8"/>
<rect x="1283.500" y="509.500" width="3" height="6" fill="#684a3e" stroke="#f6dc8e" stroke-opacity=".8"/>
<rect x="1334.500" y="483.500" width="3" height="5" fill="#958662" stroke="#f6dc8e" stroke-opacity=".8"/>
<rect x="1198.500" y="637.500" width="2" height="5" fill="#684a3e" stroke="#f6dc8e" stroke-opacity=".8"/>
<rect x="1157.500" y="594.500" width="3" height="4" fill="#684a3e" stroke="#f6dc8e" stroke-opacity=".8"/>
<rect x="1084.500" y="599.500" width="3" height="3" fill="#958662" stroke="#f6dc8e" stroke-opacity=".8"/>
<rect x="1129.500" y="589.500" width="4" height="3" fill="#684a3e" stroke="#f6dc8e" stroke-opacity=".8"/>
<rect x="1273.500" y="500.500" width="4" height="3" fill="#684a3e" stroke="#f6dc8e" stroke-opacity=".8"/>
<rect x="1301.500" y="525.500" width="3" height="3" fill="#684a3e" stroke="#f6dc8e" stroke-opacity=".8"/>
<rect x="1215.500" y="485.500" width="4" height="5" fill="#958662" stroke="#f6dc8e" stroke-opacity=".8"/>
<rect x="1247.500" y="462.500" width="3" height="3" fill="#684a3e" stroke="#f6dc8e" stroke-opacity=".8"/>
<rect x="1219.500" y="637.500" width="5" height="6" fill="#958662" stroke="#f6dc8e" stroke-opacity=".8"/>
<rect x="1187.500" y="634.500" width="4" height="3" fill="#958662" stroke="#f6dc8e" stroke-opacity=".8"/>
<rect x="1149.500" y="578.500" width="4" height="4" fill="#958662" stroke="#f6dc8e" stroke-opacity=".8"/>
<rect x="1329.500" y="546.500" width="3" height="5" fill="#958662" stroke="#f6dc8e" stroke-opacity=".8"/>
<rect x="1156.500" y="444.500" width="4" height="4" fill="#958662" stroke="#f6dc8e" stroke-opacity=".8"/>
<rect x="1195.500" y="635.500" width="3" height="3" fill="#684a3e" stroke="#f6dc8e" stroke-opacity=".8"/>
<rect x="1220.500" y="493.500" width="5" height="4" fill="#684a3e" stroke="#f6dc8e" stroke-opacity=".8"/>
<rect x="1296.500" y="600.500" width="2" height="6" fill="#684a3e" stroke="#f6dc8e" stroke-opacity=".8"/>
<rect x="1195.500" y="540.500" width="5" height="5" fill="#958662" stroke="#f6dc8e" stroke-opacity=".8"/>
<rect x="1262.500" y="630.500" width="3" height="5" fill="#958662" stroke="#f6dc8e" stroke-opacity=".8"/>
<rect x="1232.500" y="513.500" width="5" height="4" fill="#684a3e" stroke="#f6dc8e" stroke-opacity=".8"/>
<rect x="1241.500" y="487.500" width="3" height="3" fill="#684a3e" stroke="#f6dc8e" stroke-opacity=".8"/>
<rect x="1145.500" y="418.500" width="2" height="4" fill="#684a3e" stroke="#f6dc8e" stroke-opacity=".8"/>
<rect x="1308.500" y="534.500" width="3" height="4" fill="#684a3e" stroke="#f6dc8e" stroke-opacity=".8"/>
<rect x="1327.500" y="568.500" width="4" height="4" fill="#684a3e" stroke="#f6dc8e" stroke-opacity=".8"/>
<rect x="1236.500" y="442.500" width="4" height="3" fill="#684a3e" stroke="#f6dc8e" stroke-opacity=".8"/>
<rect x="1186.500" y="620.500" width="5" height="5" fill="#958662" stroke="#f6dc8e" stroke-opacity=".8"/>
<rect x="1316.500" y="543.500" width="5" height="4" fill="#684a3e" stroke="#f6dc8e" stroke-opacity=".8"/>
<rect x="1144.500" y="430.500" width="3" height="4" fill="#684a3e" stroke="#f6dc8e" stroke-opacity=".8"/>
<rect x="1234.500" y="550.500" width="4" height="4" fill="#684a3e" stroke="#f6dc8e" stroke-opacity=".8"/>
<rect x="1223.500" y="485.500" width="5" height="6" fill="#958662" stroke="#f6dc8e" stroke-opacity=".8"/>
<rect x="1228.500" y="513.500" width="2" height="4" fill="#684a3e" stroke="#f6dc8e" stroke-opacity=".8"/>
<rect x="1325.500" y="476.500" width="3" height="4" fill="#958662" stroke="#f6dc8e" stroke-opacity=".8"/>
<rect x="1220.500" y="633.500" width="4" height="3" fill="#958662" stroke="#f6dc8e" stroke-opacity=".8"/>
<rect x="1316.500" y="527.500" width="4" height="3" fill="#958662" stroke="#f6dc8e" stroke-opacity=".8"/>
<rect x="1384.500" y="604.500" width="4" height="5" fill="#684a3e" stroke="#f6dc8e" stroke-opacity=".8"/>
<rect x="1258.500" y="568.500" width="5" height="4" fill="#684a3e" stroke="#f6dc8e" stroke-opacity=".8"/>
<rect x="1255.500" y="569.500" width="3" height="4" fill="#684a3e" stroke="#f6dc8e" stroke-opacity=".8"/>
<rect x="1284.500" y="589.500" width="3" height="3" fill="#958662" stroke="#f6dc8e" stroke-opacity=".8"/>
<rect x="1325.500" y="558.500" width="5" height="4" fill="#684a3e" stroke="#f6dc8e" stroke-opacity=".8"/>
<rect x="1255.500" y="557.500" width="4" height="5" fill="#684a3e" stroke="#f6dc8e" stroke-opacity=".8"/>
<rect x="1191.500" y="601.500" width="3" height="6" fill="#958662" stroke="#f6dc8e" stroke-opacity=".8"/>
<rect x="1178.500" y="590.500" width="4" height="4" fill="#958662" stroke="#f6dc8e" stroke-opacity=".8"/>
<rect x="1220.500" y="520.500" width="5" height="5" fill="#684a3e" stroke="#f6dc8e" stroke-opacity=".8"/>
<rect x="1334.500" y="564.500" width="2" height="6" fill="#958662" stroke="#f6dc8e" stroke-opacity=".8"/>
<rect x="1256.500" y="472.500" width="5" height="5" fill="#684a3e" stroke="#f6dc8e" stroke-opacity=".8"/>
<rect x="1218.500" y="564.500" width="4" height="6" fill="#958662" stroke="#f6dc8e" stroke-opacity=".8"/>
<rect x="1187.500" y="476.500" width="3" height="3" fill="#958662" stroke="#f6dc8e" stroke-opacity=".8"/>
<rect x="1214.500" y="525.500" width="4" height="4" fill="#684a3e" stroke="#f6dc8e" stroke-opacity=".8"/>
<rect x="1153.500" y="580.500" width="3" height="3" fill="#958662" stroke="#f6dc8e" stroke-opacity=".8"/>
<rect x="1091.500" y="608.500" width="4" height="4" fill="#684a3e" stroke="#f6dc8e" stroke-opacity=".8"/>
<rect x="1135.500" y="433.500" width="4" height="4" fill="#684a3e" stroke="#f6dc8e" stroke-opacity=".8"/>
<rect x="1336.500" y="473.500" width="4" height="3" fill="#684a3e" stroke="#f6dc8e" stroke-opacity=".8"/>
<rect x="1154.500" y="448.500" width="4" height="6" fill="#958662" stroke="#f6dc8e" stroke-opacity=".8"/>
<rect x="1198.500" y="546.500" width="3" height="4" fill="#958662" stroke="#f6dc8e" stroke-opacity=".8"/>
<rect x="1182.500" y="454.500" width="2" height="3" fill="#684a3e" stroke="#f6dc8e" stroke-opacity=".8"/>
<rect x="1259.500" y="570.500" width="3" height="4" fill="#684a3e" stroke="#f6dc8e" stroke-opacity=".8"/>
<rect x="1134.500" y="587.500" width="4" height="6" fill="#684a3e" stroke="#f6dc8e" stroke-opacity=".8"/>
<rect x="1084.500" y="610.500" width="3" height="6" fill="#684a3e" stroke="#f6dc8e" stroke-opacity=".8"/>
<rect x="1219.500" y="523.500" width="3" height="3" fill="#684a3e" stroke="#f6dc8e" stroke-opacity=".8"/>
<rect x="1267.500" y="498.500" width="5" height="5" fill="#684a3e" stroke="#f6dc8e" stroke-opacity=".8"/>
<rect x="1248.500" y="574.500" width="4" height="4" fill="#958662" stroke="#f6dc8e" stroke-opacity=".8"/>
<rect x="1181.500" y="464.500" width="4" height="6" fill="#958662" stroke="#f6dc8e" stroke-opacity=".8"/>
<rect x="1260.500" y="598.500" width="3" height="4" fill="#958662" stroke="#f6dc8e" stroke-opacity=".8"/>
<rect x="1322.500" y="544.500" width="3" height="6" fill="#684a3e" stroke="#f6dc8e" stroke-opacity=".8"/>
<rect x="1313.500" y="523.500" width="2" height="5" fill="#958662" stroke="#f6dc8e" stroke-opacity=".8"/>
<rect x="1216.500" y="456.500" width="4" height="4" fill="#958662" stroke="#f6dc8e" stroke-opacity=".8"/>
<rect x="1216.500" y="467.500" width="3" height="3" fill="#958662" stroke="#f6dc8e" stroke-opacity=".8"/>
<rect x="1339.500" y="604.500" width="3" height="4" fill="#958662" stroke="#f6dc8e" stroke-opacity=".8"/>
<rect x="1207.500" y="533.500" width="4" height="4" fill="#684a3e" stroke="#f6dc8e" stroke-opacity=".8"/>
<rect x="1178.500" y="618.500" width="4" height="6" fill="#684a3e" stroke="#f6dc8e" stroke-opacity=".8"/>
<rect x="1169.500" y="444.500" width="2" height="6" fill="#684a3e" stroke="#f6dc8e" stroke-opacity=".8"/>
<rect x="1208.500" y="464.500" width="5" height="3" fill="#684a3e" stroke="#f6dc8e" stroke-opacity=".8"/>
<polygon points="1420.4,404.5 1430.5,404.5 1430.5,500.0 1414.9,500.0 1417.6,501.0 1418.5,488.1 1413.9,473.4 1399.2,453.2 1384.6,436.7 1375.4,421.7 1395.6,427.5 1406.6,434.0 1416.7,435.8 1420.4,425.7 1417.6,411.0" fill="#86a08a" stroke="#f6dc8e" stroke-width="1" stroke-linejoin="round" />
<polygon points="1357.0,448.7 1359.5,448.7 1358.9,473.4 1364.4,488.1 1375.4,494.5 1391.9,490.9 1397.4,484.5 1410.3,484.5 1412.1,493.6 1406.6,506.5 1405.4,520.0 1407.3,548.6 1404.4,577.3 1403.4,605.9 1402.5,645.0 1387.2,645.0 1385.3,626.9 1381.5,605.9 1375.8,577.3 1371.9,542.9 1363.3,520.0 1357.0,497.3 1349.7,482.6 1354.3,469.8" fill="#86a08a" stroke="#f6dc8e" stroke-width="1" stroke-linejoin="round" />
<text x="1010" y="659" class="serif" style="font-size:15.200px" fill="#fff">B: 7: t1_fl3d_nonfs_tra_dyn</text>
</svg>

<!--V3D_START--><svg class="a" style="left:1006px;top:28px" width="432" height="310" viewBox="1006 28 432 310">
<defs><linearGradient id="bg3" x1="0" y1="0" x2="0" y2="1"><stop offset="0" stop-color="#7579be"/><stop offset="1" stop-color="#c2c4e9"/></linearGradient>
<clipPath id="sil"><polygon points="1234.5,28.0 1297.0,28.0 1306.3,45.8 1315.7,67.7 1331.4,89.6 1343.9,102.0 1343.9,133.3 1351.7,155.2 1353.3,177.1 1347.0,195.9 1337.6,211.5 1328.3,227.2 1318.9,240.0 1304.6,261.4 1286.3,285.7 1268.0,307.0 1258.9,322.3 1243.7,338.0 1106.0,338.0 1064.7,292.7 1029.5,239.9 1006.0,210.5 1006.0,203.0 1030.5,176.7 1060.9,155.3 1091.4,134.0 1121.8,109.7 1152.3,82.2 1182.8,57.9 1213.2,36.6"/></clipPath>
<filter id="b6" x="-20%" y="-20%" width="140%" height="140%"><feGaussianBlur stdDeviation="6"/></filter><filter id="b3" x="-20%" y="-20%" width="140%" height="140%"><feGaussianBlur stdDeviation="2.500"/></filter></defs>
<rect x="1006" y="28" width="432" height="310" fill="url(#bg3)"/>
<path d="M1006 36.500L1019.800 28M1191.900 28L1201 44.200M1335 211.100L1438 216.300" stroke="#e81ce0" stroke-width="1.200" fill="none"/>
<polygon points="1234.5,28.0 1297.0,28.0 1306.3,45.8 1315.7,67.7 1331.4,89.6 1343.9,102.0 1343.9,133.3 1351.7,155.2 1353.3,177.1 1347.0,195.9 1337.6,211.5 1328.3,227.2 1318.9,240.0 1304.6,261.4 1286.3,285.7 1268.0,307.0 1258.9,322.3 1243.7,338.0 1106.0,338.0 1064.7,292.7 1029.5,239.9 1006.0,210.5 1006.0,203.0 1030.5,176.7 1060.9,155.3 1091.4,134.0 1121.8,109.7 1152.3,82.2 1182.8,57.9 1213.2,36.6" fill="#7aad80"/>
<g clip-path="url(#sil)">
<g filter="url(#b6)">
<polygon points="1231.0,46.0 1300.0,28.0 1345.0,105.0 1350.0,160.0 1300.0,150.0 1250.0,120.0" fill="#76a47a" opacity=".7"/>
<polygon points="1262.0,150.0 1300.0,150.0 1352.0,160.0 1356.0,190.0 1335.0,225.0 1300.0,270.0 1270.0,310.0 1250.0,338.0 1235.0,338.0 1270.0,290.0 1284.0,250.0 1275.0,205.0" fill="#5c8862" opacity=".95"/>
<polygon points="1196.0,150.0 1212.0,152.0 1236.0,182.0 1266.0,214.0 1286.0,247.0 1290.0,274.0 1276.0,300.0 1256.0,338.0 1236.0,338.0 1262.0,296.0 1272.0,270.0 1266.0,246.0 1246.0,218.0 1218.0,188.0" fill="#45704f" opacity=".95"/>
<polygon points="1085.0,200.0 1150.0,180.0 1215.0,200.0 1240.0,240.0 1235.0,300.0 1200.0,338.0 1150.0,338.0 1110.0,300.0 1085.0,250.0" fill="#84b286" opacity=".6"/>
<polygon points="1050.0,222.0 1075.0,200.0 1105.0,175.0 1096.0,215.0 1085.0,250.0 1110.0,300.0 1150.0,338.0 1120.0,338.0" fill="#6a9c70" opacity=".7"/>
<polygon points="1320.0,240.0 1352.0,190.0 1356.0,200.0 1330.0,245.0 1290.0,295.0 1262.0,330.0 1250.0,338.0 1280.0,295.0" fill="#4a7452" opacity=".8"/>
</g>
<g filter="url(#b3)" fill="none" stroke="#4c7c56" stroke-width="2" opacity=".8"><path d="M1275 105c15-4 30-2 45 6"/><path d="M1278 118c-4 14-2 30 8 44"/><path d="M1225 80c10 6 18 14 22 26"/><path d="M1310 180c-2 10 2 20 8 28"/></g>
<polygon points="1234.5,28.0 1266.2,28.3 1253.5,49.9 1228.0,67.7 1202.6,90.5 1172.1,118.5 1141.7,141.4 1116.2,159.1 1090.8,179.5 1073.0,200.0 1050.0,220.8 1006.0,203.0 1030.5,176.7 1047.6,169.3 1090.8,133.7 1136.6,95.6 1172.1,65.1 1197.6,48.0 1215.0,36.0" fill="#75643f"/>
<polyline points="1266.2,28.3 1253.5,49.9 1228.0,67.7 1202.6,90.5 1172.1,118.5 1141.7,141.4 1116.2,159.1 1090.8,179.5 1073.0,200.0 1050.0,220.8" fill="none" stroke="#c9a96c" stroke-width="2.200"/>
<polygon points="1047.6,169.3 1090.8,133.7 1136.6,95.6 1172.1,65.1 1197.6,51.1 1223.0,51.1 1217.9,65.1 1202.6,80.4 1182.3,95.6 1156.9,115.9 1136.6,136.3 1116.2,151.5 1090.8,169.3 1065.4,179.5 1047.6,179.5 1042.0,174.0" fill="#4a332a"/>
<polyline points="1223.0,51.1 1217.9,65.1 1202.6,80.4 1182.3,95.6 1156.9,115.9 1136.6,136.3 1116.2,151.5 1090.8,169.3 1065.4,179.5 1047.6,179.5" fill="none" stroke="#a06a58" stroke-width="2.500"/>
<polygon points="1006.0,203.0 1030.5,176.7 1047.6,169.3 1040.0,176.0 1015.0,200.0" fill="#5f9468"/>
<polygon points="1172.1,65.1 1197.6,48.0 1215.0,36.0 1222.0,38.0 1202.6,48.0 1180.0,62.0" fill="#5f9468"/>
<polygon points="1006.0,203.0 1049.0,218.6 1072.0,247.3 1094.0,278.0 1109.5,295.7 1129.3,313.3 1147.0,322.0 1158.0,322.0 1155.8,338.0 1102.9,338.0 1080.9,317.8 1063.3,295.7 1045.6,273.7 1028.0,247.3 1010.4,216.4 1006.0,210.0" fill="#5b8b62"/>
<polygon points="1008.0,204.0 1049.0,218.6 1072.0,247.3 1094.0,278.0 1109.5,295.7 1129.3,313.3 1147.0,322.0 1158.0,322.0 1155.0,334.0 1140.0,338.0 1112.0,338.0 1090.0,314.0 1070.0,290.0 1052.0,266.0 1034.0,240.0 1016.0,214.0" fill="#a28a52"/>
<polygon points="1049.0,218.6 1072.0,247.3 1094.0,278.0 1109.5,295.7 1129.3,313.3 1120.0,312.0 1100.0,292.0 1080.0,268.0 1062.0,244.0 1040.0,222.0" fill="#87713f"/>
<g fill="none" stroke="#cdb070" stroke-linecap="round">
<path d="M1012 208L1040 246L1066 284L1098 326" stroke-width="3.500"/>
<path d="M1020 212L1050 252L1078 288L1110 322" stroke-width="2"/>
<path d="M1030 222L1058 256L1084 286" stroke-width="1.600"/>
<path d="M1108 300L1128 316L1150 326" stroke-width="4"/>
<path d="M1086 310L1104 332" stroke-width="2.500"/>
</g>
<polygon points="1076.0,280.0 1088.0,284.0 1104.0,304.0 1112.0,316.0 1100.0,312.0 1086.0,298.0" fill="#4f7f58"/>
<polygon points="1096.0,318.0 1108.0,322.0 1122.0,338.0 1110.0,338.0" fill="#4f7f58"/>
<polygon points="1334.5,102.0 1353.3,109.9 1365.8,109.9 1378.3,117.7 1381.4,127.1 1375.2,136.5 1362.7,141.2 1356.4,150.6 1351.7,155.2 1350.1,142.7 1343.9,133.3 1343.9,117.7" fill="#5cb0d2" clip-path="none"/>
</g>
<polygon points="1334.5,102.0 1353.3,109.9 1365.8,109.9 1378.3,117.7 1381.4,127.1 1375.2,136.5 1362.7,141.2 1356.4,150.6 1351.7,157.0 1350.1,142.7 1343.9,133.3 1340.0,117.7" fill="#5cb0d2"/>
<polygon points="1215.8,245.7 1219.0,240.8 1223.0,245.0 1227.2,245.7 1231.0,240.0 1236.8,236.8 1245.7,234.4 1253.0,244.0 1262.7,257.0 1268.4,270.0 1264.3,279.6 1254.6,286.0 1245.0,287.7 1238.5,279.6 1235.2,271.5 1230.4,273.0 1227.2,268.3 1220.7,260.2 1216.7,252.0" fill="#68b6d6"/>
<polygon points="1216.7,252.0 1219.0,242.0 1227.2,247.0 1236.8,238.0 1240.0,248.0 1232.0,256.0 1234.0,268.0 1228.0,268.0 1220.7,260.2" fill="#4f9dc2" opacity=".8"/>
<polygon points="1238.0,288.0 1245.0,289.0 1240.0,295.0 1232.0,300.0 1229.0,299.0 1234.0,293.0" fill="#5aaacc"/>
<g filter="url(#b3)" fill="none" stroke="#426a4c" stroke-width="2.500" opacity=".85"><path d="M1261 228c12 14 22 30 20 46c-2 16-14 30-30 50"/><path d="M1268 232c10 12 17 27 16 40"/></g>
<path d="M1006 97.500L1180.700 338.200" stroke="#e81ce0" stroke-width="1.300" fill="none"/>
<path d="M1365.300 38v20h12.500" stroke="#fff" stroke-width="1.600" fill="none"/>
</svg>
<!--V3D_END--><!--VIEWS_END-->


</div>
</body>
</html>
